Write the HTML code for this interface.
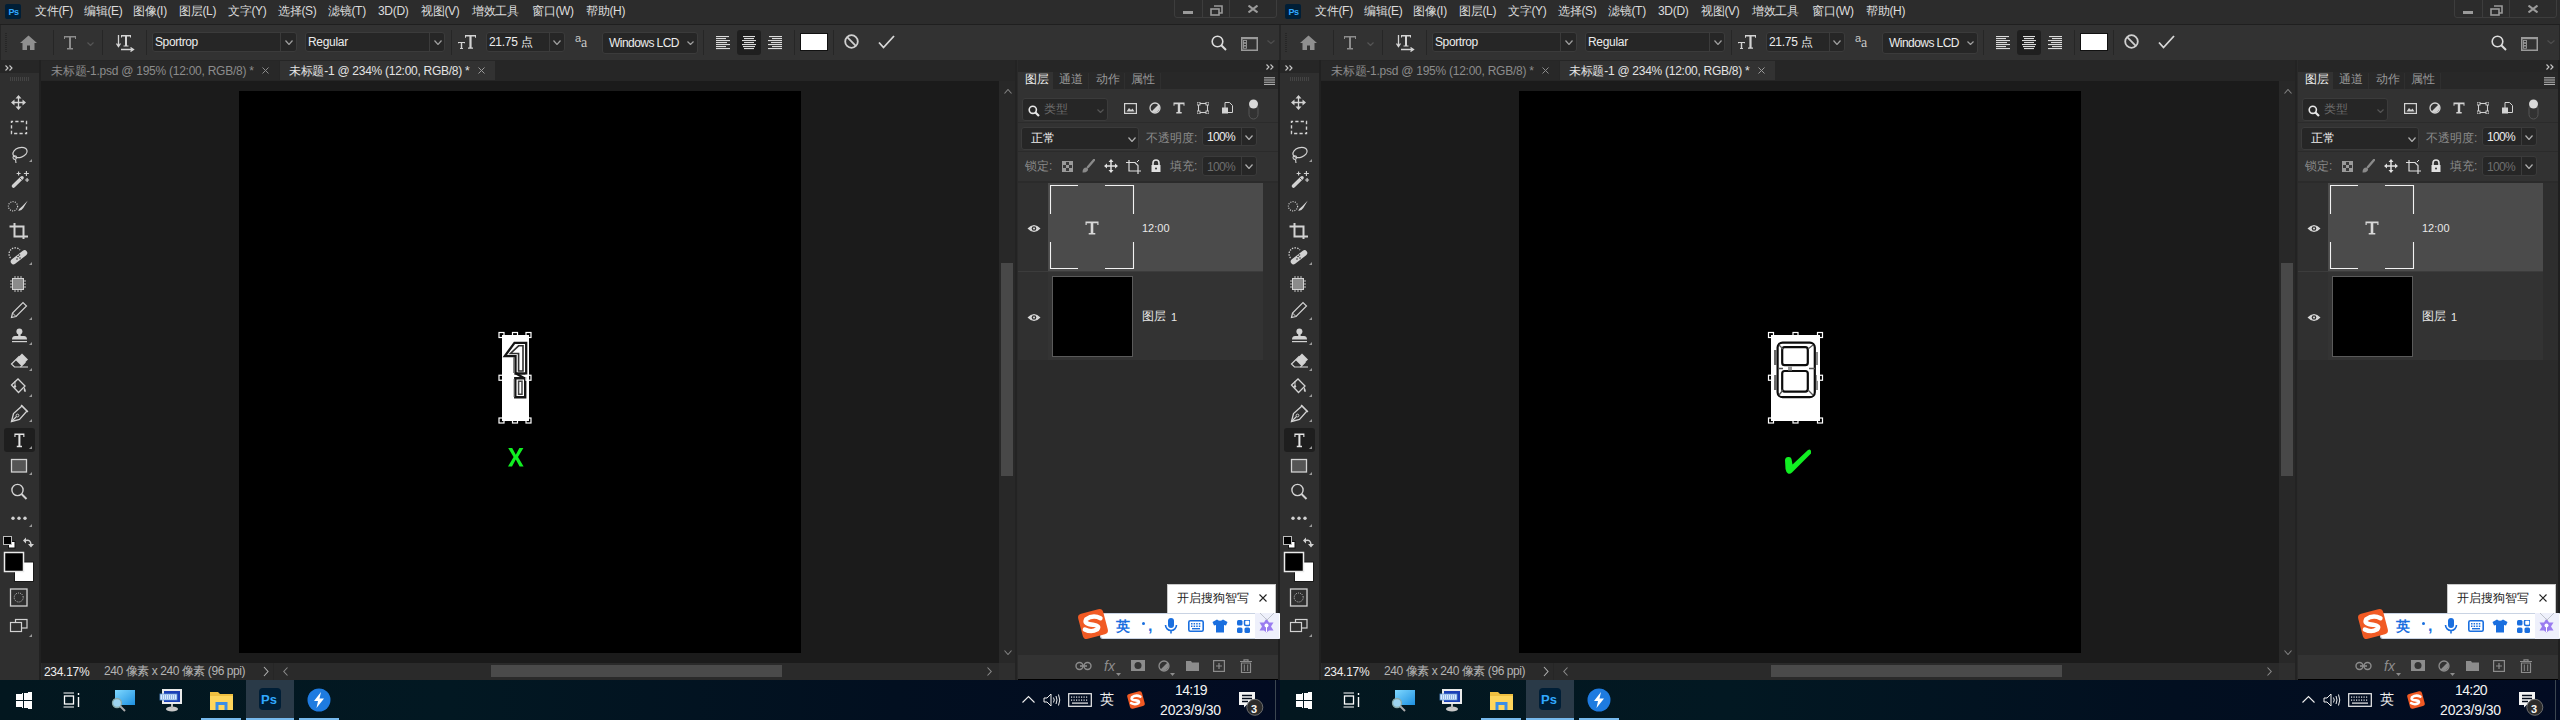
<!DOCTYPE html><html><head><meta charset="utf-8"><style>
*{margin:0;padding:0;box-sizing:border-box}
html,body{width:2560px;height:720px;overflow:hidden;background:#000}
body{font-family:"Liberation Sans",sans-serif;font-size:12px;color:#d0d0d0}
.h{position:absolute;top:0;width:1280px;height:720px;overflow:hidden}
.a{position:absolute;display:block}
.t{position:absolute;white-space:nowrap;line-height:12px}
</style></head><body><div class="h" style="left:0px"><div class="a" style="left:0px;top:0px;width:1280px;height:24px;background:#2c2c2c"></div><div class="a" style="left:0px;top:24px;width:1280px;height:1px;background:#1f1f1f"></div><div class="a" style="left:5px;top:4px;width:16px;height:15px;background:#001e36;border-radius:2px"></div><div class="t" style="left:8.5px;top:7px;font-size:9px;font-weight:bold;color:#31a8ff;line-height:10px;letter-spacing:-0.4px">Ps</div><div class="t" style="left:35px;top:5px;color:#dcdcdc;font-size:12px;line-height:13px;letter-spacing:-0.3px">文件(F)</div><div class="t" style="left:84px;top:5px;color:#dcdcdc;font-size:12px;line-height:13px;letter-spacing:-0.3px">编辑(E)</div><div class="t" style="left:133px;top:5px;color:#dcdcdc;font-size:12px;line-height:13px;letter-spacing:-0.3px">图像(I)</div><div class="t" style="left:179px;top:5px;color:#dcdcdc;font-size:12px;line-height:13px;letter-spacing:-0.3px">图层(L)</div><div class="t" style="left:228px;top:5px;color:#dcdcdc;font-size:12px;line-height:13px;letter-spacing:-0.3px">文字(Y)</div><div class="t" style="left:278px;top:5px;color:#dcdcdc;font-size:12px;line-height:13px;letter-spacing:-0.3px">选择(S)</div><div class="t" style="left:328px;top:5px;color:#dcdcdc;font-size:12px;line-height:13px;letter-spacing:-0.3px">滤镜(T)</div><div class="t" style="left:378px;top:5px;color:#dcdcdc;font-size:12px;line-height:13px;letter-spacing:-0.3px">3D(D)</div><div class="t" style="left:421px;top:5px;color:#dcdcdc;font-size:12px;line-height:13px;letter-spacing:-0.3px">视图(V)</div><div class="t" style="left:472px;top:5px;color:#dcdcdc;font-size:12px;line-height:13px;letter-spacing:-0.3px">增效工具</div><div class="t" style="left:532px;top:5px;color:#dcdcdc;font-size:12px;line-height:13px;letter-spacing:-0.3px">窗口(W)</div><div class="t" style="left:586px;top:5px;color:#dcdcdc;font-size:12px;line-height:13px;letter-spacing:-0.3px">帮助(H)</div><div class="a" style="left:1174px;top:-3px;width:103px;height:21px;border:1px solid #3d3d3d;border-radius:3px"></div><div class="a" style="left:1202px;top:0px;width:1px;height:18px;background:#3d3d3d"></div><div class="a" style="left:1229px;top:0px;width:1px;height:18px;background:#3d3d3d"></div><div class="a" style="left:1183px;top:11px;width:10px;height:3px;background:#9a9a9a"></div><svg class="a" style="left:1210px;top:5px;" width="13" height="11" viewBox="0 0 13 11"><path d="M4 1h8v7h-3" fill="none" stroke="#9a9a9a" stroke-width="1.6"/><rect x="1" y="4" width="8" height="6" fill="none" stroke="#9a9a9a" stroke-width="1.6"/></svg><svg class="a" style="left:1248px;top:5px;" width="10" height="8" viewBox="0 0 10 8"><path d="M0.5 0.5L9.5 7.5M9.5 0.5L0.5 7.5" stroke="#9a9a9a" stroke-width="2"/></svg><div class="a" style="left:0px;top:25px;width:1280px;height:35px;background:#323232"></div><div class="a" style="left:0px;top:25px;width:1px;height:35px;background:#262626"></div><div class="a" style="left:1279px;top:25px;width:1px;height:35px;background:#262626"></div><svg class="a" style="left:5px;top:33px;" width="2" height="20" viewBox="0 0 2 20"><path d="M1 0V20" stroke="#262626" stroke-width="2" stroke-dasharray="1 1"/></svg><div class="a" style="left:53px;top:30px;width:1px;height:25px;background:#262626"></div><div class="a" style="left:102px;top:30px;width:1px;height:25px;background:#262626"></div><div class="a" style="left:146px;top:30px;width:1px;height:25px;background:#262626"></div><div class="a" style="left:451px;top:30px;width:1px;height:25px;background:#262626"></div><div class="a" style="left:703px;top:30px;width:1px;height:25px;background:#262626"></div><div class="a" style="left:794px;top:30px;width:1px;height:25px;background:#262626"></div><div class="a" style="left:833px;top:30px;width:1px;height:25px;background:#262626"></div><svg class="a" style="left:20px;top:35px;" width="17" height="16" viewBox="0 0 17 16"><path d="M8.5 0.5L0 8H2.5V15H7V10.5H10V15H14.5V8H17Z" fill="#8f8f8f"/></svg><svg class="a" style="left:63px;top:35px;" width="14" height="15" viewBox="0 0 14 15"><path d="M1 1H13V4H12V2.5H8V13H10V14.5H4V13H6V2.5H2V4H1Z" fill="#8c8c8c"/></svg><svg class="a" style="left:87px;top:42px;" width="7" height="4" viewBox="0 0 7 4"><path d="M0.5 0.5 L3.5 3.5 L6.5 0.5" fill="none" stroke="#555555" stroke-width="1.2"/></svg><svg class="a" style="left:116px;top:34px;" width="19" height="18" viewBox="0 0 19 18"><path d="M2.5 1V12M0.5 9.5L2.5 12.5L4.5 9.5" fill="none" stroke="#d4d4d4" stroke-width="1.3"/><path d="M5 1H15V3.6H14V2.4H11V11.5H12.5V12.6H7.5V11.5H9V2.4H6V3.6H5Z" fill="#d4d4d4"/><path d="M5 15.5H17M14.5 13.5L17.5 15.5L14.5 17.5" fill="none" stroke="#d4d4d4" stroke-width="1.3"/></svg><div class="a" style="left:152px;top:32px;width:145px;height:20px;background:#262626;border:1px solid #3b3b3b;border-radius:3px"></div><div class="a" style="left:280px;top:33px;width:1px;height:18px;background:#3b3b3b"></div><div class="t" style="left:155px;top:36px;color:#ececec;font-size:12px;letter-spacing:-0.4px">Sportrop</div><svg class="a" style="left:285px;top:40px;" width="8" height="5" viewBox="0 0 8 5"><path d="M0.5 0.5 L4.0 4.5 L7.5 0.5" fill="none" stroke="#a0a0a0" stroke-width="1.2"/></svg><div class="a" style="left:305px;top:32px;width:140px;height:20px;background:#262626;border:1px solid #3b3b3b;border-radius:3px"></div><div class="a" style="left:429px;top:33px;width:1px;height:18px;background:#3b3b3b"></div><div class="t" style="left:308px;top:36px;color:#ececec;font-size:12px;letter-spacing:-0.3px">Regular</div><svg class="a" style="left:434px;top:40px;" width="8" height="5" viewBox="0 0 8 5"><path d="M0.5 0.5 L4.0 4.5 L7.5 0.5" fill="none" stroke="#a0a0a0" stroke-width="1.2"/></svg><svg class="a" style="left:457px;top:34px;" width="20" height="16" viewBox="0 0 20 16"><path d="M8 1H19V3.8H18V2.5H14.6V13.5H16V14.8H11V13.5H12.4V2.5H9V3.8H8Z" fill="#d4d4d4"/><path d="M1 8H8V9.5H7.5V9H5.2V14H6V15H3V14H3.8V9H1.5V9.5H1Z" fill="#d4d4d4"/></svg><div class="a" style="left:486px;top:32px;width:79px;height:20px;background:#262626;border:1px solid #3b3b3b;border-radius:3px"></div><div class="a" style="left:549px;top:33px;width:1px;height:18px;background:#3b3b3b"></div><div class="t" style="left:489px;top:36px;color:#ececec;font-size:12px;letter-spacing:-0.3px">21.75 点</div><svg class="a" style="left:553px;top:40px;" width="8" height="5" viewBox="0 0 8 5"><path d="M0.5 0.5 L4.0 4.5 L7.5 0.5" fill="none" stroke="#a0a0a0" stroke-width="1.2"/></svg><div class="t" style="left:575px;top:33px;color:#c8c8c8;font-size:11px;line-height:11px">a</div><div class="t" style="left:581px;top:37px;color:#c8c8c8;font-size:14px;line-height:12px;font-family:Liberation Serif,serif">a</div><div class="a" style="left:602px;top:32px;width:96px;height:22px;background:#262626;border:1px solid #3b3b3b;border-radius:3px"></div><div class="t" style="left:609px;top:37px;color:#ececec;font-size:12px;letter-spacing:-0.55px">Windows LCD</div><svg class="a" style="left:687px;top:41px;" width="7" height="4" viewBox="0 0 7 4"><path d="M0.5 0.5 L3.5 3.5 L6.5 0.5" fill="none" stroke="#a0a0a0" stroke-width="1.2"/></svg><div class="a" style="left:737px;top:30px;width:24px;height:25px;background:#1f1f1f;border-radius:3px"></div><svg class="a" style="left:716px;top:36px;" width="15" height="14" viewBox="0 0 15 14"><rect x="0" y="0" width="13" height="1.1" fill="#dcdcdc"/><rect x="0" y="2" width="10" height="1.1" fill="#dcdcdc"/><rect x="0" y="4" width="14" height="1.1" fill="#dcdcdc"/><rect x="0" y="6" width="11" height="1.1" fill="#dcdcdc"/><rect x="0" y="8" width="14" height="1.1" fill="#dcdcdc"/><rect x="0" y="10" width="10" height="1.1" fill="#dcdcdc"/><rect x="0" y="12" width="14" height="1.1" fill="#dcdcdc"/></svg><svg class="a" style="left:742px;top:36px;" width="15" height="14" viewBox="0 0 15 14"><rect x="1" y="0" width="12" height="1.1" fill="#dcdcdc"/><rect x="2" y="2" width="10" height="1.1" fill="#dcdcdc"/><rect x="0" y="4" width="14" height="1.1" fill="#dcdcdc"/><rect x="2" y="6" width="10" height="1.1" fill="#dcdcdc"/><rect x="0" y="8" width="14" height="1.1" fill="#dcdcdc"/><rect x="1" y="10" width="12" height="1.1" fill="#dcdcdc"/><rect x="2" y="12" width="10" height="1.1" fill="#dcdcdc"/></svg><svg class="a" style="left:768px;top:36px;" width="15" height="14" viewBox="0 0 15 14"><rect x="1" y="0" width="13" height="1.1" fill="#dcdcdc"/><rect x="4" y="2" width="10" height="1.1" fill="#dcdcdc"/><rect x="0" y="4" width="14" height="1.1" fill="#dcdcdc"/><rect x="3" y="6" width="11" height="1.1" fill="#dcdcdc"/><rect x="0" y="8" width="14" height="1.1" fill="#dcdcdc"/><rect x="4" y="10" width="10" height="1.1" fill="#dcdcdc"/><rect x="0" y="12" width="14" height="1.1" fill="#dcdcdc"/></svg><div class="a" style="left:800px;top:33px;width:28px;height:18px;background:#ffffff;border:1px solid #111"></div><svg class="a" style="left:844px;top:34px;" width="15" height="15" viewBox="0 0 15 15"><circle cx="7.5" cy="7.5" r="6.3" fill="none" stroke="#d0d0d0" stroke-width="1.8"/><path d="M3.2 3.2L11.8 11.8" stroke="#d0d0d0" stroke-width="1.8"/></svg><svg class="a" style="left:878px;top:35px;" width="17" height="14" viewBox="0 0 17 14"><path d="M1 7.5L5.5 12.5L16 1" fill="none" stroke="#d8d8d8" stroke-width="1.8"/></svg><svg class="a" style="left:1211px;top:35px;" width="17" height="17" viewBox="0 0 17 17"><circle cx="6.5" cy="6.5" r="5.3" fill="none" stroke="#dcdcdc" stroke-width="1.6"/><path d="M10.3 10.3L15 15" stroke="#dcdcdc" stroke-width="2"/></svg><svg class="a" style="left:1241px;top:37px;" width="17" height="14" viewBox="0 0 17 14"><rect x="0.75" y="0.75" width="15.5" height="12.5" fill="none" stroke="#9a9a9a" stroke-width="1.5"/><rect x="0" y="0" width="17" height="2.2" fill="#9a9a9a"/><rect x="2.5" y="3.5" width="3" height="2.2" fill="none" stroke="#9a9a9a" stroke-width="0.9"/><rect x="2.5" y="6.3" width="3" height="2.2" fill="none" stroke="#9a9a9a" stroke-width="0.9"/><rect x="2.5" y="9.1" width="3" height="2.2" fill="none" stroke="#9a9a9a" stroke-width="0.9"/></svg><svg class="a" style="left:1267px;top:40px;" width="8" height="4" viewBox="0 0 8 4"><path d="M0.5 0.5 L4.0 3.5 L7.5 0.5" fill="none" stroke="#4e4e4e" stroke-width="1.2"/></svg><div class="a" style="left:0px;top:60px;width:1280px;height:21px;background:#262626"></div><div class="a" style="left:0px;top:73px;width:39px;height:607px;background:#2f2f2f"></div><div class="a" style="left:39px;top:60px;width:2px;height:620px;background:#212121"></div><svg class="a" style="left:5px;top:65px;" width="9" height="6" viewBox="0 0 9 6"><path d="M0.5 0.5L3 3L0.5 5.5M4.5 0.5L7 3L4.5 5.5" fill="none" stroke="#c8c8c8" stroke-width="1.1"/></svg><svg class="a" style="left:10px;top:77px;" width="20" height="4" viewBox="0 0 20 4"><rect x="0" y="0" width="1" height="4" fill="#444"/><rect x="2" y="0" width="1" height="4" fill="#444"/><rect x="4" y="0" width="1" height="4" fill="#444"/><rect x="6" y="0" width="1" height="4" fill="#444"/><rect x="8" y="0" width="1" height="4" fill="#444"/><rect x="10" y="0" width="1" height="4" fill="#444"/><rect x="12" y="0" width="1" height="4" fill="#444"/><rect x="14" y="0" width="1" height="4" fill="#444"/><rect x="16" y="0" width="1" height="4" fill="#444"/><rect x="18" y="0" width="1" height="4" fill="#444"/></svg><div class="a" style="left:41px;top:61px;width:238px;height:19px;background:#282828"></div><div class="a" style="left:280px;top:61px;width:215px;height:19px;background:#323232"></div><div class="t" style="left:51px;top:65px;color:#8c8c8c;font-size:12px;line-height:13px;letter-spacing:-0.25px">未标题-1.psd @ 195% (12:00, RGB/8) *</div><svg class="a" style="left:262px;top:67px;" width="7" height="7" viewBox="0 0 7 7"><path d="M0.5 0.5L6.5 6.5M6.5 0.5L0.5 6.5" stroke="#8c8c8c" stroke-width="1"/></svg><div class="t" style="left:289px;top:65px;color:#e4e4e4;font-size:12px;line-height:13px;letter-spacing:-0.27px">未标题-1 @ 234% (12:00, RGB/8) *</div><svg class="a" style="left:478px;top:67px;" width="7" height="7" viewBox="0 0 7 7"><path d="M0.5 0.5L6.5 6.5M6.5 0.5L0.5 6.5" stroke="#9a9a9a" stroke-width="1"/></svg><div class="a" style="left:4px;top:428px;width:31px;height:24px;background:#1e1e1e;border-radius:3px"></div><svg class="a" style="left:0px;top:0px;" width="40" height="680" viewBox="0 0 40 680"><path d="M18.5 97V108M13 102.5H24" stroke="#d2d2d2" stroke-width="1.3"/><path d="M18.5 95L15.5 98.5H21.5ZM18.5 110L15.5 106.5H21.5ZM11 102.5L14.5 99.5V105.5ZM26 102.5L22.5 99.5V105.5Z" fill="#d2d2d2"/><rect x="11.5" y="121.5" width="15" height="12" fill="none" stroke="#d2d2d2" stroke-width="1.4" stroke-dasharray="3.2 2.2" stroke-dashoffset="1.6"/><ellipse cx="20" cy="152.5" rx="7.3" ry="4.8" transform="rotate(-18 20 152.5)" fill="none" stroke="#d2d2d2" stroke-width="1.2"/><circle cx="14.8" cy="157.6" r="1.8" fill="none" stroke="#d2d2d2" stroke-width="1.1"/><path d="M15.5 159.5L16 163" stroke="#d2d2d2" stroke-width="1.1"/><path d="M13.5 186L22 177.8" stroke="#d2d2d2" stroke-width="3.6" stroke-linecap="round"/><path d="M20.2 178.2L21.6 179.6" stroke="#2f2f2f" stroke-width="1"/><path d="M18.6 171.5V175.5M16.6 173.5H20.6M26.4 171V176M23.9 173.5H28.9M27.1 178V182M25.1 180H29.1" stroke="#d2d2d2" stroke-width="1.1"/><circle cx="13" cy="206.3" r="4.6" fill="none" stroke="#d2d2d2" stroke-width="1.2" stroke-dasharray="1 1.3"/><path d="M27.8 200.5L22 206.5Q19 208.5 18.3 211Q21.5 211 23.3 208Z" fill="#d2d2d2"/><path d="M14.5 223V236.5H28M9.5 226.5H23.5V239" fill="none" stroke="#d2d2d2" stroke-width="2"/><path d="M13.5 261.5L24.5 253" stroke="#d2d2d2" stroke-width="5.5" stroke-linecap="round"/><circle cx="18" cy="256.5" r="0.8" fill="#2f2f2f"/><circle cx="20" cy="258" r="0.8" fill="#2f2f2f"/><circle cx="17" cy="259" r="0.8" fill="#2f2f2f"/><circle cx="19.5" cy="255" r="0.8" fill="#2f2f2f"/><path d="M10.5 258A5.5 5.5 0 0 1 20 250" fill="none" stroke="#d2d2d2" stroke-width="1.2" stroke-dasharray="1.4 1.2"/><rect x="12.5" y="278.5" width="11" height="11" fill="#8a8a8a" stroke="#d2d2d2" stroke-width="1"/><path d="M15 276V278M18 276V278M21 276V278M15 290V292M18 290V292M21 290V292M10 281H12M10 284H12M10 287H12M24 281H26M24 284H26M24 287H26" stroke="#d2d2d2" stroke-width="0.9"/><path d="M11.5 317.5L12.5 313L23 302.5L26.5 306L16 316.5Z" fill="none" stroke="#d2d2d2" stroke-width="1.2"/><path d="M12.5 313L16 316.5" stroke="#d2d2d2" stroke-width="1"/><circle cx="19.4" cy="331.5" r="3" fill="#d2d2d2"/><rect x="18.2" y="333" width="2.4" height="3" fill="#d2d2d2"/><path d="M12 339.5Q12 336 15 336H24Q27 336 27 339.5Z" fill="#d2d2d2"/><rect x="12" y="341" width="15" height="1.2" fill="#d2d2d2"/><path d="M11.5 364L19 356.5L25 362.5L20.5 367H14.5Z" fill="none" stroke="#d2d2d2" stroke-width="1.2"/><path d="M15.5 360L22 353.5L28 359.5L21.5 366Z" fill="#d2d2d2"/><path d="M20.5 367H28" stroke="#d2d2d2" stroke-width="1.1"/><path d="M11.5 385L18 379L25 386L18.5 392.5Z" fill="none" stroke="#d2d2d2" stroke-width="1.3"/><path d="M15 381V386" stroke="#d2d2d2" stroke-width="1"/><circle cx="15" cy="386.5" r="1.2" fill="#d2d2d2"/><path d="M24 387Q26.5 390 25.5 392Q23 392 24 387Z" fill="#d2d2d2"/><path d="M11.5 421.5L13.5 413.5L22 406L27 411L19.5 419.5Z" fill="none" stroke="#d2d2d2" stroke-width="1.3"/><circle cx="17.5" cy="415.5" r="1.4" fill="none" stroke="#d2d2d2" stroke-width="1"/><path d="M11.5 421.5L16.5 416.5M21 405L28 412" stroke="#d2d2d2" stroke-width="1.2"/><path d="M14.4 433.5H24.4V437H23.3V435H20.4V445.8H22V447.3H16.8V445.8H18.4V435H15.5V437H14.4Z" fill="#e4e4e4"/><rect x="11.5" y="459.5" width="15" height="12.5" fill="#555" stroke="#d2d2d2" stroke-width="1.3"/><circle cx="17.5" cy="490" r="5.6" fill="none" stroke="#d2d2d2" stroke-width="1.4"/><path d="M21.5 494L26.5 499" stroke="#d2d2d2" stroke-width="2"/><circle cx="13" cy="518.2" r="1.7" fill="#d2d2d2"/><circle cx="19" cy="518.2" r="1.7" fill="#d2d2d2"/><circle cx="25" cy="518.2" r="1.7" fill="#d2d2d2"/><path d="M32 159V162H29Z" fill="#9a9a9a"/><path d="M32 262V265H29Z" fill="#9a9a9a"/><path d="M32 317V320H29Z" fill="#9a9a9a"/><path d="M32 342V345H29Z" fill="#9a9a9a"/><path d="M32 368V371H29Z" fill="#9a9a9a"/><path d="M32 394V397H29Z" fill="#9a9a9a"/><path d="M32 419V422H29Z" fill="#9a9a9a"/><path d="M32 446V449H29Z" fill="#9a9a9a"/><path d="M32 472V475H29Z" fill="#9a9a9a"/><path d="M32 524V527H29Z" fill="#9a9a9a"/><path d="M32 634V637H29Z" fill="#9a9a9a"/><rect x="8.5" y="541.5" width="6.5" height="6.5" fill="#fff" stroke="#111" stroke-width="1"/><rect x="3.5" y="536.5" width="8" height="8" fill="#000" stroke="#bbb" stroke-width="1"/><path d="M25.5 540.5Q30.5 539 31 544.5" fill="none" stroke="#d2d2d2" stroke-width="1.5"/><path d="M23 540.5L26 537.5V543.5ZM31 547.5L28 544H34Z" fill="#d2d2d2"/><rect x="14.5" y="562" width="19" height="19.5" fill="#fff" stroke="#1a1a1a" stroke-width="1"/><rect x="4.5" y="552.5" width="19" height="19" fill="#000" stroke="#eaeaea" stroke-width="1.5"/><rect x="10.5" y="589" width="16.5" height="17" fill="none" stroke="#d2d2d2" stroke-width="1.3"/><circle cx="18.7" cy="597.5" r="4.5" fill="none" stroke="#d2d2d2" stroke-width="1" stroke-dasharray="0.9 1.1"/><rect x="15.5" y="619.5" width="11.5" height="8.5" fill="none" stroke="#d2d2d2" stroke-width="1.2"/><rect x="10.5" y="622.5" width="11" height="9" fill="#2f2f2f" stroke="#d2d2d2" stroke-width="1.2"/></svg><div class="a" style="left:41px;top:81px;width:958px;height:582px;background:#1b1b1b"></div><div class="a" style="left:239px;top:91px;width:562px;height:562px;background:#000"></div><div class="a" style="left:502px;top:335px;width:27px;height:86px;background:#fff"></div><svg class="a" style="left:0px;top:0px;" width="1280" height="720" viewBox="0 0 1280 720"><g fill="none" stroke-linejoin="miter"><path d="M514.5 342.8H526.2V373.5H515.5V356.2H504.8Z" stroke="#151515" stroke-width="2.3"/><path d="M518.6 345.8H523V371H518.6V353.5H510.5Z" stroke="#303030" stroke-width="1.6"/><path d="M516 373.5L524 378" stroke="#111" stroke-width="2.2"/><path d="M515.3 378.3H525.2V397.2H515.3Z" stroke="#151515" stroke-width="2.4"/><path d="M518.6 381.2H522V394.3H518.6Z" stroke="#444" stroke-width="1.5"/><path d="M513.5 357V373" stroke="#888" stroke-width="1"/><path d="M514 379V397" stroke="#888" stroke-width="1"/></g><rect x="499.0" y="332.5" width="5" height="5" fill="none" stroke="#fff" stroke-width="1.2"/><rect x="512.5" y="332.5" width="5" height="5" fill="none" stroke="#fff" stroke-width="1.2"/><rect x="526.0" y="332.5" width="5" height="5" fill="none" stroke="#fff" stroke-width="1.2"/><rect x="499.0" y="375.25" width="5" height="5" fill="none" stroke="#fff" stroke-width="1.2"/><rect x="526.0" y="375.25" width="5" height="5" fill="none" stroke="#fff" stroke-width="1.2"/><rect x="499.0" y="418.0" width="5" height="5" fill="none" stroke="#fff" stroke-width="1.2"/><rect x="512.5" y="418.0" width="5" height="5" fill="none" stroke="#fff" stroke-width="1.2"/><rect x="526.0" y="418.0" width="5" height="5" fill="none" stroke="#fff" stroke-width="1.2"/></svg><svg class="a" style="left:0px;top:0px;" width="1280" height="720" viewBox="0 0 1280 720"><path d="M508.2 448H512.2L515.8 454.8L519.4 448H523.4L518 457L523.6 466.5H519.6L515.8 459.6L512 466.5H508L513.6 457Z" fill="#11ee22"/></svg><div class="a" style="left:999px;top:81px;width:16px;height:582px;background:#282828"></div><div class="a" style="left:1001px;top:263px;width:12px;height:213px;background:#484848"></div><svg class="a" style="left:1004px;top:89px;" width="8" height="5" viewBox="0 0 8 5"><path d="M0.5 4.5 L4.0 0.5 L7.5 4.5" fill="none" stroke="#808080" stroke-width="1.1"/></svg><svg class="a" style="left:1004px;top:650px;" width="8" height="5" viewBox="0 0 8 5"><path d="M0.5 0.5 L4.0 4.5 L7.5 0.5" fill="none" stroke="#808080" stroke-width="1.1"/></svg><div class="a" style="left:41px;top:663px;width:958px;height:17px;background:#2a2a2a"></div><div class="a" style="left:42px;top:663px;width:48px;height:17px;background:#262626"></div><div class="t" style="left:44px;top:666px;color:#eeeeee;font-size:12px;letter-spacing:-0.3px">234.17%</div><div class="t" style="left:104px;top:665px;color:#b4b4b4;font-size:12px;line-height:13px;letter-spacing:-0.43px">240 像素 x 240 像素 (96 ppi)</div><svg class="a" style="left:263px;top:666px;" width="6" height="11" viewBox="0 0 6 11"><path d="M1 1L5 5.5L1 10" fill="none" stroke="#b0b0b0" stroke-width="1.1"/></svg><div class="a" style="left:273px;top:663px;width:1px;height:17px;background:#262626"></div><svg class="a" style="left:283px;top:667px;" width="5" height="9" viewBox="0 0 5 9"><path d="M4.5 0.5L0.8 4.5L4.5 8.5" fill="none" stroke="#8a8a8a" stroke-width="1.1"/></svg><div class="a" style="left:491px;top:665px;width:291px;height:12px;background:#4a4a4a"></div><svg class="a" style="left:987px;top:667px;" width="5" height="9" viewBox="0 0 5 9"><path d="M0.5 0.5L4.2 4.5L0.5 8.5" fill="none" stroke="#8a8a8a" stroke-width="1.1"/></svg><div class="a" style="left:999px;top:663px;width:16px;height:17px;background:#2e2e2e"></div><div class="a" style="left:1015px;top:60px;width:2px;height:620px;background:#232323"></div><div class="a" style="left:1017px;top:60px;width:1px;height:620px;background:#2a2a2a"></div><div class="a" style="left:1018px;top:60px;width:262px;height:12px;background:#262626"></div><svg class="a" style="left:1266px;top:64px;" width="9" height="6" viewBox="0 0 9 6"><path d="M0.5 0.5L3 3L0.5 5.5M4.5 0.5L7 3L4.5 5.5" fill="none" stroke="#c8c8c8" stroke-width="1.1"/></svg><div class="a" style="left:1018px;top:72px;width:260px;height:17px;background:#282828"></div><div class="a" style="left:1018px;top:72px;width:35px;height:17px;background:#323232"></div><div class="a" style="left:1088px;top:73px;width:1px;height:16px;background:#2f2f2f"></div><div class="a" style="left:1124px;top:73px;width:1px;height:16px;background:#2f2f2f"></div><div class="a" style="left:1160px;top:73px;width:1px;height:16px;background:#2f2f2f"></div><div class="t" style="left:1025px;top:73px;color:#eeeeee;font-size:12px;line-height:13px">图层</div><div class="t" style="left:1059px;top:73px;color:#999999;font-size:12px;line-height:13px">通道</div><div class="t" style="left:1096px;top:73px;color:#999999;font-size:12px;line-height:13px">动作</div><div class="t" style="left:1131px;top:73px;color:#999999;font-size:12px;line-height:13px">属性</div><svg class="a" style="left:1264px;top:77px;" width="11" height="8" viewBox="0 0 11 8"><rect x="0" y="0.3" width="11" height="1" fill="#bdbdbd"/><rect x="0" y="2.5" width="11" height="1" fill="#bdbdbd"/><rect x="0" y="4.7" width="11" height="1" fill="#bdbdbd"/><rect x="0" y="6.9" width="11" height="1" fill="#bdbdbd"/></svg><div class="a" style="left:1018px;top:89px;width:260px;height:94px;background:#323232"></div><div class="a" style="left:1022px;top:98px;width:86px;height:23px;background:#262626;border:1px solid #3b3b3b;border-radius:3px"></div><svg class="a" style="left:1028px;top:105px;" width="12" height="12" viewBox="0 0 12 12"><circle cx="4.8" cy="4.8" r="3.6" fill="none" stroke="#e8e8e8" stroke-width="1.6"/><path d="M7.5 7.5L11 11" stroke="#e8e8e8" stroke-width="2.2"/></svg><div class="t" style="left:1044px;top:103px;color:#6c6c6c;font-size:12px;line-height:13px">类型</div><svg class="a" style="left:1097px;top:109px;" width="7" height="4" viewBox="0 0 7 4"><path d="M0.5 0.5 L3.5 3.5 L6.5 0.5" fill="none" stroke="#555" stroke-width="1.2"/></svg><svg class="a" style="left:1124px;top:103px;" width="13" height="11" viewBox="0 0 13 11"><rect x="0.6" y="0.6" width="11.8" height="9.8" fill="none" stroke="#d2d2d2" stroke-width="1.2"/><path d="M2.5 8.5L5 5L7 7L8.5 5.5L10.5 8.5Z" fill="#d2d2d2"/></svg><svg class="a" style="left:1149px;top:102px;" width="12" height="12" viewBox="0 0 12 12"><circle cx="6" cy="6" r="5" fill="none" stroke="#d2d2d2" stroke-width="1.3"/><path d="M9.5 2.5A5 5 0 0 1 2.5 9.5Z" fill="#d2d2d2"/></svg><svg class="a" style="left:1173px;top:102px;" width="12" height="12" viewBox="0 0 12 12"><path d="M0.5 0.5H11.5V3.8H10.5V2.3H7.2V10H8.7V11.5H3.3V10H4.8V2.3H1.5V3.8H0.5Z" fill="#d2d2d2"/></svg><svg class="a" style="left:1197px;top:102px;" width="12" height="12" viewBox="0 0 12 12"><rect x="1.5" y="1.5" width="9" height="9" fill="none" stroke="#d2d2d2" stroke-width="1.1"/><g fill="#323232" stroke="#d2d2d2" stroke-width="0.9"><rect x="0" y="0" width="3" height="3"/><rect x="9" y="0" width="3" height="3"/><rect x="0" y="9" width="3" height="3"/><rect x="9" y="9" width="3" height="3"/></g></svg><svg class="a" style="left:1221px;top:102px;" width="12" height="12" viewBox="0 0 12 12"><path d="M4 0.5H8.5L11.5 3.5V10.5H4Z" fill="none" stroke="#d2d2d2" stroke-width="1"/><rect x="1" y="5.5" width="6" height="6" fill="#d2d2d2"/></svg><svg class="a" style="left:1248px;top:99px;" width="11" height="21" viewBox="0 0 11 21"><rect x="1" y="5" width="9" height="15" rx="4.5" fill="none" stroke="#555" stroke-width="1"/><circle cx="5.5" cy="5" r="4.5" fill="#d8d8d8"/></svg><div class="a" style="left:1018px;top:122px;width:260px;height:1px;background:#2b2b2b"></div><div class="a" style="left:1021px;top:127px;width:118px;height:23px;background:#262626;border:1px solid #3b3b3b;border-radius:3px"></div><div class="t" style="left:1031px;top:132px;color:#eeeeee;font-size:12px;line-height:13px">正常</div><svg class="a" style="left:1128px;top:137px;" width="8" height="5" viewBox="0 0 8 5"><path d="M0.5 0.5 L4.0 4.5 L7.5 0.5" fill="none" stroke="#b0b0b0" stroke-width="1.2"/></svg><div class="t" style="left:1146px;top:132px;color:#8a8a8a;font-size:12px;line-height:13px">不透明度:</div><div class="a" style="left:1202px;top:127px;width:55px;height:19px;background:#262626;border:1px solid #3b3b3b;border-radius:3px"></div><div class="a" style="left:1241px;top:128px;width:1px;height:17px;background:#3b3b3b"></div><div class="t" style="left:1207px;top:131px;color:#ececec;font-size:12px;letter-spacing:-0.7px">100%</div><svg class="a" style="left:1245px;top:135px;" width="8" height="5" viewBox="0 0 8 5"><path d="M0.5 0.5 L4.0 4.5 L7.5 0.5" fill="none" stroke="#b0b0b0" stroke-width="1.2"/></svg><div class="a" style="left:1018px;top:151px;width:260px;height:1px;background:#2b2b2b"></div><div class="t" style="left:1025px;top:160px;color:#8a8a8a;font-size:12px;line-height:13px">锁定:</div><svg class="a" style="left:1062px;top:161px;" width="11" height="11" viewBox="0 0 11 11"><rect x="0.5" y="0.5" width="10" height="10" fill="#3a3a3a" stroke="#9a9a9a" stroke-width="1"/><rect x="1" y="1" width="3" height="3" fill="#9a9a9a"/><rect x="7" y="1" width="3" height="3" fill="#9a9a9a"/><rect x="4" y="4" width="3" height="3" fill="#9a9a9a"/><rect x="1" y="7" width="3" height="3" fill="#9a9a9a"/><rect x="7" y="7" width="3" height="3" fill="#9a9a9a"/></svg><svg class="a" style="left:1082px;top:159px;" width="13" height="14" viewBox="0 0 13 14"><path d="M12 1L6 8" stroke="#8a8a8a" stroke-width="2.4" stroke-linecap="round"/><path d="M0.5 13.5Q0.5 8.5 4.5 8.5Q7 9.5 5.5 12Q3.5 14 0.5 13.5Z" fill="#8a8a8a"/></svg><svg class="a" style="left:1104px;top:159px;" width="14" height="14" viewBox="0 0 14 14"><path d="M7 1V13M1 7H13" stroke="#e0e0e0" stroke-width="1.5"/><path d="M7 0L4.5 3H9.5ZM7 14L4.5 11H9.5ZM0 7L3 4.5V9.5ZM14 7L11 4.5V9.5Z" fill="#e0e0e0"/></svg><svg class="a" style="left:1126px;top:159px;" width="15" height="15" viewBox="0 0 15 15"><path d="M3 1V4M0 3.5H3M3 4V12H12M12 15V12M12 12H15M3.5 3.5H9L12 6.5V12" fill="none" stroke="#dedede" stroke-width="1.2"/><path d="M13 1L11 3" stroke="#dedede" stroke-width="1"/></svg><svg class="a" style="left:1150px;top:159px;" width="12" height="13" viewBox="0 0 12 13"><path d="M3 6V4A3 3 0 0 1 9 4V6" fill="none" stroke="#e0e0e0" stroke-width="1.6"/><rect x="1.5" y="6" width="9" height="7" fill="#e0e0e0"/><circle cx="6" cy="9.5" r="1" fill="#333"/></svg><div class="t" style="left:1170px;top:160px;color:#8a8a8a;font-size:12px;line-height:13px">填充:</div><div class="a" style="left:1202px;top:156px;width:55px;height:20px;background:#262626;border:1px solid #3b3b3b;border-radius:3px"></div><div class="a" style="left:1241px;top:157px;width:1px;height:18px;background:#3b3b3b"></div><div class="t" style="left:1207px;top:161px;color:#6e6e6e;font-size:12px;letter-spacing:-0.7px">100%</div><svg class="a" style="left:1245px;top:164px;" width="8" height="5" viewBox="0 0 8 5"><path d="M0.5 0.5 L4.0 4.5 L7.5 0.5" fill="none" stroke="#b0b0b0" stroke-width="1.2"/></svg><div class="a" style="left:1018px;top:181px;width:260px;height:2px;background:#2b2b2b"></div><div class="a" style="left:1018px;top:183px;width:260px;height:177px;background:#333333"></div><div class="a" style="left:1018px;top:183px;width:30px;height:177px;background:#303030"></div><div class="a" style="left:1263px;top:183px;width:15px;height:177px;background:#2e2e2e"></div><div class="a" style="left:1048px;top:183px;width:215px;height:88px;background:#4b4b4b"></div><div class="a" style="left:1018px;top:271px;width:245px;height:1px;background:#3c3c3c"></div><svg class="a" style="left:1027px;top:224px;" width="14" height="9" viewBox="0 0 14 9"><path d="M0.5 4.5Q7 -2.5 13.5 4.5Q7 11.5 0.5 4.5Z" fill="#d8d8d8"/><circle cx="7" cy="4.5" r="2.3" fill="#333"/><circle cx="7" cy="4.5" r="1" fill="#d8d8d8"/></svg><svg class="a" style="left:1027px;top:313px;" width="14" height="9" viewBox="0 0 14 9"><path d="M0.5 4.5Q7 -2.5 13.5 4.5Q7 11.5 0.5 4.5Z" fill="#d8d8d8"/><circle cx="7" cy="4.5" r="2.3" fill="#333"/><circle cx="7" cy="4.5" r="1" fill="#d8d8d8"/></svg><svg class="a" style="left:1049px;top:184px;" width="86" height="86" viewBox="0 0 86 86"><path d="M1.5 30V1.5H29M56 1.5H84.5V30M84.5 58V84.5H56M29 84.5H1.5V58" fill="none" stroke="#f2f2f2" stroke-width="1.1"/></svg><svg class="a" style="left:1085px;top:221px;" width="14" height="14" viewBox="0 0 14 14"><path d="M0.5 0.5H13.5V4H12.3V2.2H8.3V12H10.3V13.5H3.7V12H5.7V2.2H1.7V4H0.5Z" fill="#d8d8d8"/></svg><div class="t" style="left:1142px;top:222px;color:#e8e8e8;font-size:11px;line-height:12px">12:00</div><div class="a" style="left:1052px;top:276px;width:81px;height:81px;background:#000;border:1px solid #5a5a5a"></div><div class="t" style="left:1142px;top:310px;color:#e8e8e8;font-size:12px;line-height:13px">图层</div><div class="t" style="left:1171px;top:311px;color:#e8e8e8;font-size:11px;line-height:12px">1</div><div class="a" style="left:1018px;top:360px;width:260px;height:295px;background:#2b2b2b"></div><div class="a" style="left:1018px;top:655px;width:260px;height:24px;background:#333333"></div><svg class="a" style="left:1075px;top:661px;" width="17" height="10" viewBox="0 0 17 10"><rect x="1" y="1.5" width="7" height="7" rx="3.5" fill="none" stroke="#8c8c8c" stroke-width="1.4"/><rect x="9" y="1.5" width="7" height="7" rx="3.5" fill="none" stroke="#8c8c8c" stroke-width="1.4"/><path d="M5 5H12" stroke="#8c8c8c" stroke-width="1.6"/></svg><div class="t" style="left:1104px;top:660px;color:#8c8c8c;font-size:14px;line-height:13px"><i>fx</i></div><svg class="a" style="left:1131px;top:660px;" width="14" height="11" viewBox="0 0 14 11"><rect x="0" y="0" width="14" height="11" fill="#8c8c8c"/><circle cx="7" cy="5.5" r="3.5" fill="#333"/></svg><svg class="a" style="left:1158px;top:660px;" width="13" height="13" viewBox="0 0 13 13"><circle cx="6" cy="6" r="5" fill="none" stroke="#8c8c8c" stroke-width="1.3"/><path d="M9.5 2.5A5 5 0 0 1 2.5 9.5Z" fill="#8c8c8c"/></svg><svg class="a" style="left:1186px;top:660px;" width="13" height="11" viewBox="0 0 13 11"><path d="M0 1H5L6 2.5H13V11H0Z" fill="#8c8c8c"/></svg><svg class="a" style="left:1213px;top:660px;" width="12" height="12" viewBox="0 0 12 12"><rect x="0.6" y="0.6" width="10.8" height="10.8" fill="none" stroke="#8c8c8c" stroke-width="1.2"/><path d="M6 3V9M3 6H9" stroke="#8c8c8c" stroke-width="1.2"/></svg><svg class="a" style="left:1240px;top:659px;" width="12" height="14" viewBox="0 0 12 14"><path d="M0 2.5H12M4 2.5V0.8H8V2.5" fill="none" stroke="#8c8c8c" stroke-width="1.2"/><path d="M1.5 4H10.5V13.5H1.5Z" fill="none" stroke="#8c8c8c" stroke-width="1.2"/><path d="M4.3 5.5V12M7.7 5.5V12" stroke="#8c8c8c" stroke-width="1"/></svg><svg class="a" style="left:1116px;top:673px;" width="5" height="3" viewBox="0 0 5 3"><path d="M0 0H5L2.5 3Z" fill="#8c8c8c"/></svg><svg class="a" style="left:1170px;top:673px;" width="5" height="3" viewBox="0 0 5 3"><path d="M0 0H5L2.5 3Z" fill="#8c8c8c"/></svg><div class="a" style="left:1278px;top:60px;width:2px;height:620px;background:#1f1f1f"></div><div class="a" style="left:1167px;top:584px;width:109px;height:30px;background:#fff;border:1px solid #c8c8c8"></div><div class="t" style="left:1177px;top:592px;color:#222;font-size:12px;line-height:13px">开启搜狗智写</div><svg class="a" style="left:1259px;top:594px;" width="8" height="8" viewBox="0 0 8 8"><path d="M0.5 0.5L7.5 7.5M7.5 0.5L0.5 7.5" stroke="#222" stroke-width="1.1"/></svg><div class="a" style="left:1100px;top:613px;width:180px;height:26px;background:#fff;border:1px solid #c9d3e3;border-right:none;border-radius:3px 0 0 3px"></div><svg class="a" style="left:1076px;top:607px;" width="34" height="34" viewBox="0 0 34 34"><g transform="rotate(-15 17.0 17.0)"><rect x="4.08" y="4.08" width="25.84" height="25.84" rx="4.08" fill="#f15a24"/></g><path d="M24.48 11.22Q17.0 7.48 10.2 12.24Q7.48 17.0 17.0 17.68Q24.48 18.700000000000003 21.08 22.44Q15.3 25.84 8.84 22.44" fill="none" stroke="#fff" stroke-width="4.42" stroke-linecap="round"/></svg><div class="t" style="left:1116px;top:619px;color:#1a6fdf;font-size:14px;line-height:15px;font-weight:bold">英</div><div class="a" style="left:1142px;top:622px;width:3px;height:3px;background:#1a6fdf;border-radius:50%"></div><div class="t" style="left:1148px;top:617px;color:#1a6fdf;font-size:16px;line-height:17px;font-weight:bold">,</div><svg class="a" style="left:1164px;top:618px;" width="14" height="16" viewBox="0 0 14 16"><rect x="4" y="0" width="6" height="10" rx="3" fill="#1a6fdf"/><path d="M1.5 7A5.5 5.5 0 0 0 12.5 7M7 12.5V15.5" fill="none" stroke="#1a6fdf" stroke-width="1.6"/></svg><svg class="a" style="left:1188px;top:620px;" width="16" height="12" viewBox="0 0 16 12"><rect x="0.8" y="0.8" width="14.4" height="10.4" rx="1.5" fill="none" stroke="#1a6fdf" stroke-width="1.6"/><rect x="3.0" y="3" width="1.5" height="1.5" fill="#1a6fdf"/><rect x="3.0" y="5.5" width="1.5" height="1.5" fill="#1a6fdf"/><rect x="5.6" y="3" width="1.5" height="1.5" fill="#1a6fdf"/><rect x="5.6" y="5.5" width="1.5" height="1.5" fill="#1a6fdf"/><rect x="8.2" y="3" width="1.5" height="1.5" fill="#1a6fdf"/><rect x="8.2" y="5.5" width="1.5" height="1.5" fill="#1a6fdf"/><rect x="10.8" y="3" width="1.5" height="1.5" fill="#1a6fdf"/><rect x="10.8" y="5.5" width="1.5" height="1.5" fill="#1a6fdf"/><rect x="4" y="8" width="8" height="1.4" fill="#1a6fdf"/></svg><svg class="a" style="left:1212px;top:619px;" width="16" height="14" viewBox="0 0 16 14"><path d="M5 0.5L0.5 3L2 6.5L4 6V13.5H12V6L14 6.5L15.5 3L11 0.5Q8 3 5 0.5Z" fill="#1a6fdf"/></svg><svg class="a" style="left:1237px;top:620px;" width="13" height="13" viewBox="0 0 13 13"><rect x="0" y="0" width="5.5" height="5.5" rx="1.5" fill="#1a6fdf"/><rect x="7.5" y="0" width="5.5" height="5.5" rx="1.5" fill="none" stroke="#1a6fdf" stroke-width="1.5"/><rect x="0" y="7.5" width="5.5" height="5.5" rx="1.5" fill="#1a6fdf"/><rect x="7.5" y="7.5" width="5.5" height="5.5" rx="1.5" fill="#1a6fdf"/></svg><div class="a" style="left:1255px;top:613px;width:24px;height:26px;background:#eef0fb"></div><svg class="a" style="left:1259px;top:618px;" width="15" height="15" viewBox="0 0 15 15"><path d="M7.5 0.5L10 4.5H14.5L12 8.5L14.5 12.5H10L7.5 14.5L5 12.5H0.5L3 8.5L0.5 4.5H5Z" fill="#9a7cf0"/><circle cx="7.5" cy="7.5" r="2" fill="#fff"/><path d="M7.5 9V14" stroke="#fff" stroke-width="1"/></svg><svg class="a" style="left:1260px;top:612px;" width="14" height="9" viewBox="0 0 14 9"><path d="M0 1L7 8L14 1" fill="none" stroke="#bfc3cc" stroke-width="1"/></svg><div class="a" style="left:0px;top:680px;width:1280px;height:40px;background:linear-gradient(90deg,#03171f 0%,#021822 35%,#020f20 70%,#020b22 100%)"></div><svg class="a" style="left:16px;top:692px;" width="17" height="17" viewBox="0 0 17 17"><path d="M0 2.3L7 1.3V8H0ZM8 1.1L16 0V8H8ZM0 9H7V15.7L0 14.7ZM8 9H16V17L8 15.9Z" fill="#fff" shape-rendering="crispEdges"/></svg><svg class="a" style="left:63px;top:692px;" width="18" height="16" viewBox="0 0 18 16"><path d="M0.5 1H11M0.5 15H11" stroke="#fff" stroke-width="1.2"/><rect x="1.5" y="4" width="9" height="8" fill="none" stroke="#fff" stroke-width="1.3"/><path d="M15.5 1V3M15.5 5V15" stroke="#fff" stroke-width="1.4"/></svg><svg class="a" style="left:111px;top:689px;" width="25" height="24" viewBox="0 0 25 24"><rect x="4" y="1" width="20" height="15" fill="#4cc2ff"/><rect x="4" y="1" width="20" height="15" fill="url(#g1)"/><circle cx="6" cy="14" r="4.5" fill="#9cd3f0" stroke="#8aa" stroke-width="1.3"/><path d="M9 17L14 22" stroke="#aaa" stroke-width="2"/><defs><linearGradient id="g1" x1="0" y1="0" x2="1" y2="1"><stop offset="0" stop-color="#7fd8ff"/><stop offset="1" stop-color="#1e90e0"/></linearGradient></defs></svg><svg class="a" style="left:159px;top:688px;" width="25" height="25" viewBox="0 0 25 25"><rect x="3" y="1" width="20" height="15" fill="#eaeaea"/><rect x="5" y="3" width="16" height="11" fill="#1b3fb5"/><rect x="1" y="6" width="17" height="6" fill="#d8ecff" stroke="#5a8fd0" stroke-width="0.8"/><path d="M3 8H16M3 10H16" stroke="#3a6fc8" stroke-width="0.8" stroke-dasharray="1 1"/><ellipse cx="13" cy="21" rx="6" ry="2.5" fill="#c8c8c8"/><rect x="12" y="16" width="2" height="4" fill="#bbb"/></svg><svg class="a" style="left:210px;top:691px;" width="23" height="19" viewBox="0 0 23 19"><path d="M0 1H8L10 3H23V19H0Z" fill="#f0c040"/><path d="M0 5H23V19H0Z" fill="#ffd65c"/><rect x="5.5" y="11" width="12" height="8" fill="#3a8ee6"/><rect x="8.5" y="14" width="6" height="5" fill="#ffd65c"/></svg><div class="a" style="left:246px;top:680px;width:48px;height:40px;background:#2a3a48"></div><div class="a" style="left:259px;top:688px;width:22px;height:22px;background:#001e36;border-radius:4px"></div><div class="t" style="left:261px;top:693px;color:#31a8ff;font-size:13px;font-weight:bold;line-height:13px">Ps</div><svg class="a" style="left:307px;top:688px;" width="24" height="24" viewBox="0 0 24 24"><circle cx="12" cy="12" r="11.5" fill="#1e7be0"/><path d="M14 4L7 13H11L9.5 20L17 10.5H12.5Z" fill="#fff"/></svg><div class="a" style="left:201px;top:718px;width:40px;height:2px;background:#76b9ed"></div><div class="a" style="left:246px;top:718px;width:48px;height:2px;background:#76b9ed"></div><div class="a" style="left:299px;top:718px;width:40px;height:2px;background:#76b9ed"></div><svg class="a" style="left:1022px;top:695px;" width="13" height="8" viewBox="0 0 13 8"><path d="M0.5 7.5L6.5 1.5L12.5 7.5" fill="none" stroke="#f0f0f0" stroke-width="1.1"/></svg><svg class="a" style="left:1043px;top:693px;" width="18" height="14" viewBox="0 0 18 14"><path d="M1 5H4L8 1V13L4 9H1Z" fill="none" stroke="#f0f0f0" stroke-width="1"/><path d="M10.5 4.5Q12 7 10.5 9.5M13 3Q15 7 13 11M15.5 1.5Q18 7 15.5 12.5" fill="none" stroke="#f0f0f0" stroke-width="1"/></svg><svg class="a" style="left:1068px;top:693px;" width="24" height="14" viewBox="0 0 24 14"><rect x="0.7" y="0.7" width="22.6" height="12.6" fill="none" stroke="#f0f0f0" stroke-width="1.2"/><rect x="3.0" y="3.5" width="1.2" height="1.2" fill="#f0f0f0"/><rect x="3.0" y="6.5" width="1.2" height="1.2" fill="#f0f0f0"/><rect x="5.5" y="3.5" width="1.2" height="1.2" fill="#f0f0f0"/><rect x="5.5" y="6.5" width="1.2" height="1.2" fill="#f0f0f0"/><rect x="8.0" y="3.5" width="1.2" height="1.2" fill="#f0f0f0"/><rect x="8.0" y="6.5" width="1.2" height="1.2" fill="#f0f0f0"/><rect x="10.5" y="3.5" width="1.2" height="1.2" fill="#f0f0f0"/><rect x="10.5" y="6.5" width="1.2" height="1.2" fill="#f0f0f0"/><rect x="13.0" y="3.5" width="1.2" height="1.2" fill="#f0f0f0"/><rect x="13.0" y="6.5" width="1.2" height="1.2" fill="#f0f0f0"/><rect x="15.5" y="3.5" width="1.2" height="1.2" fill="#f0f0f0"/><rect x="15.5" y="6.5" width="1.2" height="1.2" fill="#f0f0f0"/><rect x="18.0" y="3.5" width="1.2" height="1.2" fill="#f0f0f0"/><rect x="18.0" y="6.5" width="1.2" height="1.2" fill="#f0f0f0"/><rect x="4" y="9.5" width="16" height="1.2" fill="#f0f0f0"/></svg><div class="t" style="left:1100px;top:692px;color:#f0f0f0;font-size:14px;line-height:15px">英</div><svg class="a" style="left:1126px;top:690px;" width="20" height="20" viewBox="0 0 20 20"><g transform="rotate(-15 10.0 10.0)"><rect x="2.4" y="2.4" width="15.2" height="15.2" rx="2.4" fill="#f15a24"/></g><path d="M14.399999999999999 6.6000000000000005Q10.0 4.4 6.0 7.199999999999999Q4.4 10.0 10.0 10.4Q14.399999999999999 11.0 12.4 13.200000000000001Q9.0 15.2 5.2 13.200000000000001" fill="none" stroke="#fff" stroke-width="2.6" stroke-linecap="round"/></svg><div class="t" style="left:1175px;top:683px;color:#f4f4f4;font-size:14px;line-height:14px;letter-spacing:-0.6px">14:19</div><div class="t" style="left:1160px;top:703px;color:#f4f4f4;font-size:14px;line-height:14px;letter-spacing:-0.15px">2023/9/30</div><svg class="a" style="left:1238px;top:691px;" width="28" height="28" viewBox="0 0 28 28"><path d="M1 1H17V14H8.5L6 16.5V14H1Z" fill="#f4f4f4"/><path d="M4 4.5H14M4 7.5H14M4 10.5H10" stroke="#050d1c" stroke-width="1.3"/><circle cx="16.8" cy="16.3" r="8" fill="#2b2b2b" stroke="#777" stroke-width="0.9"/></svg><div class="t" style="left:1251px;top:703px;color:#f8f8f8;font-size:11px;line-height:12px;font-weight:bold">3</div><div class="a" style="left:1275px;top:680px;width:1px;height:40px;background:#3c4650"></div></div><div class="h" style="left:1280px"><div class="a" style="left:0px;top:0px;width:1280px;height:24px;background:#2c2c2c"></div><div class="a" style="left:0px;top:24px;width:1280px;height:1px;background:#1f1f1f"></div><div class="a" style="left:5px;top:4px;width:16px;height:15px;background:#001e36;border-radius:2px"></div><div class="t" style="left:8.5px;top:7px;font-size:9px;font-weight:bold;color:#31a8ff;line-height:10px;letter-spacing:-0.4px">Ps</div><div class="t" style="left:35px;top:5px;color:#dcdcdc;font-size:12px;line-height:13px;letter-spacing:-0.3px">文件(F)</div><div class="t" style="left:84px;top:5px;color:#dcdcdc;font-size:12px;line-height:13px;letter-spacing:-0.3px">编辑(E)</div><div class="t" style="left:133px;top:5px;color:#dcdcdc;font-size:12px;line-height:13px;letter-spacing:-0.3px">图像(I)</div><div class="t" style="left:179px;top:5px;color:#dcdcdc;font-size:12px;line-height:13px;letter-spacing:-0.3px">图层(L)</div><div class="t" style="left:228px;top:5px;color:#dcdcdc;font-size:12px;line-height:13px;letter-spacing:-0.3px">文字(Y)</div><div class="t" style="left:278px;top:5px;color:#dcdcdc;font-size:12px;line-height:13px;letter-spacing:-0.3px">选择(S)</div><div class="t" style="left:328px;top:5px;color:#dcdcdc;font-size:12px;line-height:13px;letter-spacing:-0.3px">滤镜(T)</div><div class="t" style="left:378px;top:5px;color:#dcdcdc;font-size:12px;line-height:13px;letter-spacing:-0.3px">3D(D)</div><div class="t" style="left:421px;top:5px;color:#dcdcdc;font-size:12px;line-height:13px;letter-spacing:-0.3px">视图(V)</div><div class="t" style="left:472px;top:5px;color:#dcdcdc;font-size:12px;line-height:13px;letter-spacing:-0.3px">增效工具</div><div class="t" style="left:532px;top:5px;color:#dcdcdc;font-size:12px;line-height:13px;letter-spacing:-0.3px">窗口(W)</div><div class="t" style="left:586px;top:5px;color:#dcdcdc;font-size:12px;line-height:13px;letter-spacing:-0.3px">帮助(H)</div><div class="a" style="left:1174px;top:-3px;width:103px;height:21px;border:1px solid #3d3d3d;border-radius:3px"></div><div class="a" style="left:1202px;top:0px;width:1px;height:18px;background:#3d3d3d"></div><div class="a" style="left:1229px;top:0px;width:1px;height:18px;background:#3d3d3d"></div><div class="a" style="left:1183px;top:11px;width:10px;height:3px;background:#9a9a9a"></div><svg class="a" style="left:1210px;top:5px;" width="13" height="11" viewBox="0 0 13 11"><path d="M4 1h8v7h-3" fill="none" stroke="#9a9a9a" stroke-width="1.6"/><rect x="1" y="4" width="8" height="6" fill="none" stroke="#9a9a9a" stroke-width="1.6"/></svg><svg class="a" style="left:1248px;top:5px;" width="10" height="8" viewBox="0 0 10 8"><path d="M0.5 0.5L9.5 7.5M9.5 0.5L0.5 7.5" stroke="#9a9a9a" stroke-width="2"/></svg><div class="a" style="left:0px;top:25px;width:1280px;height:35px;background:#323232"></div><div class="a" style="left:0px;top:25px;width:1px;height:35px;background:#262626"></div><div class="a" style="left:1279px;top:25px;width:1px;height:35px;background:#262626"></div><svg class="a" style="left:5px;top:33px;" width="2" height="20" viewBox="0 0 2 20"><path d="M1 0V20" stroke="#262626" stroke-width="2" stroke-dasharray="1 1"/></svg><div class="a" style="left:53px;top:30px;width:1px;height:25px;background:#262626"></div><div class="a" style="left:102px;top:30px;width:1px;height:25px;background:#262626"></div><div class="a" style="left:146px;top:30px;width:1px;height:25px;background:#262626"></div><div class="a" style="left:451px;top:30px;width:1px;height:25px;background:#262626"></div><div class="a" style="left:703px;top:30px;width:1px;height:25px;background:#262626"></div><div class="a" style="left:794px;top:30px;width:1px;height:25px;background:#262626"></div><div class="a" style="left:833px;top:30px;width:1px;height:25px;background:#262626"></div><svg class="a" style="left:20px;top:35px;" width="17" height="16" viewBox="0 0 17 16"><path d="M8.5 0.5L0 8H2.5V15H7V10.5H10V15H14.5V8H17Z" fill="#8f8f8f"/></svg><svg class="a" style="left:63px;top:35px;" width="14" height="15" viewBox="0 0 14 15"><path d="M1 1H13V4H12V2.5H8V13H10V14.5H4V13H6V2.5H2V4H1Z" fill="#8c8c8c"/></svg><svg class="a" style="left:87px;top:42px;" width="7" height="4" viewBox="0 0 7 4"><path d="M0.5 0.5 L3.5 3.5 L6.5 0.5" fill="none" stroke="#555555" stroke-width="1.2"/></svg><svg class="a" style="left:116px;top:34px;" width="19" height="18" viewBox="0 0 19 18"><path d="M2.5 1V12M0.5 9.5L2.5 12.5L4.5 9.5" fill="none" stroke="#d4d4d4" stroke-width="1.3"/><path d="M5 1H15V3.6H14V2.4H11V11.5H12.5V12.6H7.5V11.5H9V2.4H6V3.6H5Z" fill="#d4d4d4"/><path d="M5 15.5H17M14.5 13.5L17.5 15.5L14.5 17.5" fill="none" stroke="#d4d4d4" stroke-width="1.3"/></svg><div class="a" style="left:152px;top:32px;width:145px;height:20px;background:#262626;border:1px solid #3b3b3b;border-radius:3px"></div><div class="a" style="left:280px;top:33px;width:1px;height:18px;background:#3b3b3b"></div><div class="t" style="left:155px;top:36px;color:#ececec;font-size:12px;letter-spacing:-0.4px">Sportrop</div><svg class="a" style="left:285px;top:40px;" width="8" height="5" viewBox="0 0 8 5"><path d="M0.5 0.5 L4.0 4.5 L7.5 0.5" fill="none" stroke="#a0a0a0" stroke-width="1.2"/></svg><div class="a" style="left:305px;top:32px;width:140px;height:20px;background:#262626;border:1px solid #3b3b3b;border-radius:3px"></div><div class="a" style="left:429px;top:33px;width:1px;height:18px;background:#3b3b3b"></div><div class="t" style="left:308px;top:36px;color:#ececec;font-size:12px;letter-spacing:-0.3px">Regular</div><svg class="a" style="left:434px;top:40px;" width="8" height="5" viewBox="0 0 8 5"><path d="M0.5 0.5 L4.0 4.5 L7.5 0.5" fill="none" stroke="#a0a0a0" stroke-width="1.2"/></svg><svg class="a" style="left:457px;top:34px;" width="20" height="16" viewBox="0 0 20 16"><path d="M8 1H19V3.8H18V2.5H14.6V13.5H16V14.8H11V13.5H12.4V2.5H9V3.8H8Z" fill="#d4d4d4"/><path d="M1 8H8V9.5H7.5V9H5.2V14H6V15H3V14H3.8V9H1.5V9.5H1Z" fill="#d4d4d4"/></svg><div class="a" style="left:486px;top:32px;width:79px;height:20px;background:#262626;border:1px solid #3b3b3b;border-radius:3px"></div><div class="a" style="left:549px;top:33px;width:1px;height:18px;background:#3b3b3b"></div><div class="t" style="left:489px;top:36px;color:#ececec;font-size:12px;letter-spacing:-0.3px">21.75 点</div><svg class="a" style="left:553px;top:40px;" width="8" height="5" viewBox="0 0 8 5"><path d="M0.5 0.5 L4.0 4.5 L7.5 0.5" fill="none" stroke="#a0a0a0" stroke-width="1.2"/></svg><div class="t" style="left:575px;top:33px;color:#c8c8c8;font-size:11px;line-height:11px">a</div><div class="t" style="left:581px;top:37px;color:#c8c8c8;font-size:14px;line-height:12px;font-family:Liberation Serif,serif">a</div><div class="a" style="left:602px;top:32px;width:96px;height:22px;background:#262626;border:1px solid #3b3b3b;border-radius:3px"></div><div class="t" style="left:609px;top:37px;color:#ececec;font-size:12px;letter-spacing:-0.55px">Windows LCD</div><svg class="a" style="left:687px;top:41px;" width="7" height="4" viewBox="0 0 7 4"><path d="M0.5 0.5 L3.5 3.5 L6.5 0.5" fill="none" stroke="#a0a0a0" stroke-width="1.2"/></svg><div class="a" style="left:737px;top:30px;width:24px;height:25px;background:#1f1f1f;border-radius:3px"></div><svg class="a" style="left:716px;top:36px;" width="15" height="14" viewBox="0 0 15 14"><rect x="0" y="0" width="13" height="1.1" fill="#dcdcdc"/><rect x="0" y="2" width="10" height="1.1" fill="#dcdcdc"/><rect x="0" y="4" width="14" height="1.1" fill="#dcdcdc"/><rect x="0" y="6" width="11" height="1.1" fill="#dcdcdc"/><rect x="0" y="8" width="14" height="1.1" fill="#dcdcdc"/><rect x="0" y="10" width="10" height="1.1" fill="#dcdcdc"/><rect x="0" y="12" width="14" height="1.1" fill="#dcdcdc"/></svg><svg class="a" style="left:742px;top:36px;" width="15" height="14" viewBox="0 0 15 14"><rect x="1" y="0" width="12" height="1.1" fill="#dcdcdc"/><rect x="2" y="2" width="10" height="1.1" fill="#dcdcdc"/><rect x="0" y="4" width="14" height="1.1" fill="#dcdcdc"/><rect x="2" y="6" width="10" height="1.1" fill="#dcdcdc"/><rect x="0" y="8" width="14" height="1.1" fill="#dcdcdc"/><rect x="1" y="10" width="12" height="1.1" fill="#dcdcdc"/><rect x="2" y="12" width="10" height="1.1" fill="#dcdcdc"/></svg><svg class="a" style="left:768px;top:36px;" width="15" height="14" viewBox="0 0 15 14"><rect x="1" y="0" width="13" height="1.1" fill="#dcdcdc"/><rect x="4" y="2" width="10" height="1.1" fill="#dcdcdc"/><rect x="0" y="4" width="14" height="1.1" fill="#dcdcdc"/><rect x="3" y="6" width="11" height="1.1" fill="#dcdcdc"/><rect x="0" y="8" width="14" height="1.1" fill="#dcdcdc"/><rect x="4" y="10" width="10" height="1.1" fill="#dcdcdc"/><rect x="0" y="12" width="14" height="1.1" fill="#dcdcdc"/></svg><div class="a" style="left:800px;top:33px;width:28px;height:18px;background:#ffffff;border:1px solid #111"></div><svg class="a" style="left:844px;top:34px;" width="15" height="15" viewBox="0 0 15 15"><circle cx="7.5" cy="7.5" r="6.3" fill="none" stroke="#d0d0d0" stroke-width="1.8"/><path d="M3.2 3.2L11.8 11.8" stroke="#d0d0d0" stroke-width="1.8"/></svg><svg class="a" style="left:878px;top:35px;" width="17" height="14" viewBox="0 0 17 14"><path d="M1 7.5L5.5 12.5L16 1" fill="none" stroke="#d8d8d8" stroke-width="1.8"/></svg><svg class="a" style="left:1211px;top:35px;" width="17" height="17" viewBox="0 0 17 17"><circle cx="6.5" cy="6.5" r="5.3" fill="none" stroke="#dcdcdc" stroke-width="1.6"/><path d="M10.3 10.3L15 15" stroke="#dcdcdc" stroke-width="2"/></svg><svg class="a" style="left:1241px;top:37px;" width="17" height="14" viewBox="0 0 17 14"><rect x="0.75" y="0.75" width="15.5" height="12.5" fill="none" stroke="#9a9a9a" stroke-width="1.5"/><rect x="0" y="0" width="17" height="2.2" fill="#9a9a9a"/><rect x="2.5" y="3.5" width="3" height="2.2" fill="none" stroke="#9a9a9a" stroke-width="0.9"/><rect x="2.5" y="6.3" width="3" height="2.2" fill="none" stroke="#9a9a9a" stroke-width="0.9"/><rect x="2.5" y="9.1" width="3" height="2.2" fill="none" stroke="#9a9a9a" stroke-width="0.9"/></svg><svg class="a" style="left:1267px;top:40px;" width="8" height="4" viewBox="0 0 8 4"><path d="M0.5 0.5 L4.0 3.5 L7.5 0.5" fill="none" stroke="#4e4e4e" stroke-width="1.2"/></svg><div class="a" style="left:0px;top:60px;width:1280px;height:21px;background:#262626"></div><div class="a" style="left:0px;top:73px;width:39px;height:607px;background:#2f2f2f"></div><div class="a" style="left:39px;top:60px;width:2px;height:620px;background:#212121"></div><svg class="a" style="left:5px;top:65px;" width="9" height="6" viewBox="0 0 9 6"><path d="M0.5 0.5L3 3L0.5 5.5M4.5 0.5L7 3L4.5 5.5" fill="none" stroke="#c8c8c8" stroke-width="1.1"/></svg><svg class="a" style="left:10px;top:77px;" width="20" height="4" viewBox="0 0 20 4"><rect x="0" y="0" width="1" height="4" fill="#444"/><rect x="2" y="0" width="1" height="4" fill="#444"/><rect x="4" y="0" width="1" height="4" fill="#444"/><rect x="6" y="0" width="1" height="4" fill="#444"/><rect x="8" y="0" width="1" height="4" fill="#444"/><rect x="10" y="0" width="1" height="4" fill="#444"/><rect x="12" y="0" width="1" height="4" fill="#444"/><rect x="14" y="0" width="1" height="4" fill="#444"/><rect x="16" y="0" width="1" height="4" fill="#444"/><rect x="18" y="0" width="1" height="4" fill="#444"/></svg><div class="a" style="left:41px;top:61px;width:238px;height:19px;background:#282828"></div><div class="a" style="left:280px;top:61px;width:215px;height:19px;background:#323232"></div><div class="t" style="left:51px;top:65px;color:#8c8c8c;font-size:12px;line-height:13px;letter-spacing:-0.25px">未标题-1.psd @ 195% (12:00, RGB/8) *</div><svg class="a" style="left:262px;top:67px;" width="7" height="7" viewBox="0 0 7 7"><path d="M0.5 0.5L6.5 6.5M6.5 0.5L0.5 6.5" stroke="#8c8c8c" stroke-width="1"/></svg><div class="t" style="left:289px;top:65px;color:#e4e4e4;font-size:12px;line-height:13px;letter-spacing:-0.27px">未标题-1 @ 234% (12:00, RGB/8) *</div><svg class="a" style="left:478px;top:67px;" width="7" height="7" viewBox="0 0 7 7"><path d="M0.5 0.5L6.5 6.5M6.5 0.5L0.5 6.5" stroke="#9a9a9a" stroke-width="1"/></svg><div class="a" style="left:4px;top:428px;width:31px;height:24px;background:#1e1e1e;border-radius:3px"></div><svg class="a" style="left:0px;top:0px;" width="40" height="680" viewBox="0 0 40 680"><path d="M18.5 97V108M13 102.5H24" stroke="#d2d2d2" stroke-width="1.3"/><path d="M18.5 95L15.5 98.5H21.5ZM18.5 110L15.5 106.5H21.5ZM11 102.5L14.5 99.5V105.5ZM26 102.5L22.5 99.5V105.5Z" fill="#d2d2d2"/><rect x="11.5" y="121.5" width="15" height="12" fill="none" stroke="#d2d2d2" stroke-width="1.4" stroke-dasharray="3.2 2.2" stroke-dashoffset="1.6"/><ellipse cx="20" cy="152.5" rx="7.3" ry="4.8" transform="rotate(-18 20 152.5)" fill="none" stroke="#d2d2d2" stroke-width="1.2"/><circle cx="14.8" cy="157.6" r="1.8" fill="none" stroke="#d2d2d2" stroke-width="1.1"/><path d="M15.5 159.5L16 163" stroke="#d2d2d2" stroke-width="1.1"/><path d="M13.5 186L22 177.8" stroke="#d2d2d2" stroke-width="3.6" stroke-linecap="round"/><path d="M20.2 178.2L21.6 179.6" stroke="#2f2f2f" stroke-width="1"/><path d="M18.6 171.5V175.5M16.6 173.5H20.6M26.4 171V176M23.9 173.5H28.9M27.1 178V182M25.1 180H29.1" stroke="#d2d2d2" stroke-width="1.1"/><circle cx="13" cy="206.3" r="4.6" fill="none" stroke="#d2d2d2" stroke-width="1.2" stroke-dasharray="1 1.3"/><path d="M27.8 200.5L22 206.5Q19 208.5 18.3 211Q21.5 211 23.3 208Z" fill="#d2d2d2"/><path d="M14.5 223V236.5H28M9.5 226.5H23.5V239" fill="none" stroke="#d2d2d2" stroke-width="2"/><path d="M13.5 261.5L24.5 253" stroke="#d2d2d2" stroke-width="5.5" stroke-linecap="round"/><circle cx="18" cy="256.5" r="0.8" fill="#2f2f2f"/><circle cx="20" cy="258" r="0.8" fill="#2f2f2f"/><circle cx="17" cy="259" r="0.8" fill="#2f2f2f"/><circle cx="19.5" cy="255" r="0.8" fill="#2f2f2f"/><path d="M10.5 258A5.5 5.5 0 0 1 20 250" fill="none" stroke="#d2d2d2" stroke-width="1.2" stroke-dasharray="1.4 1.2"/><rect x="12.5" y="278.5" width="11" height="11" fill="#8a8a8a" stroke="#d2d2d2" stroke-width="1"/><path d="M15 276V278M18 276V278M21 276V278M15 290V292M18 290V292M21 290V292M10 281H12M10 284H12M10 287H12M24 281H26M24 284H26M24 287H26" stroke="#d2d2d2" stroke-width="0.9"/><path d="M11.5 317.5L12.5 313L23 302.5L26.5 306L16 316.5Z" fill="none" stroke="#d2d2d2" stroke-width="1.2"/><path d="M12.5 313L16 316.5" stroke="#d2d2d2" stroke-width="1"/><circle cx="19.4" cy="331.5" r="3" fill="#d2d2d2"/><rect x="18.2" y="333" width="2.4" height="3" fill="#d2d2d2"/><path d="M12 339.5Q12 336 15 336H24Q27 336 27 339.5Z" fill="#d2d2d2"/><rect x="12" y="341" width="15" height="1.2" fill="#d2d2d2"/><path d="M11.5 364L19 356.5L25 362.5L20.5 367H14.5Z" fill="none" stroke="#d2d2d2" stroke-width="1.2"/><path d="M15.5 360L22 353.5L28 359.5L21.5 366Z" fill="#d2d2d2"/><path d="M20.5 367H28" stroke="#d2d2d2" stroke-width="1.1"/><path d="M11.5 385L18 379L25 386L18.5 392.5Z" fill="none" stroke="#d2d2d2" stroke-width="1.3"/><path d="M15 381V386" stroke="#d2d2d2" stroke-width="1"/><circle cx="15" cy="386.5" r="1.2" fill="#d2d2d2"/><path d="M24 387Q26.5 390 25.5 392Q23 392 24 387Z" fill="#d2d2d2"/><path d="M11.5 421.5L13.5 413.5L22 406L27 411L19.5 419.5Z" fill="none" stroke="#d2d2d2" stroke-width="1.3"/><circle cx="17.5" cy="415.5" r="1.4" fill="none" stroke="#d2d2d2" stroke-width="1"/><path d="M11.5 421.5L16.5 416.5M21 405L28 412" stroke="#d2d2d2" stroke-width="1.2"/><path d="M14.4 433.5H24.4V437H23.3V435H20.4V445.8H22V447.3H16.8V445.8H18.4V435H15.5V437H14.4Z" fill="#e4e4e4"/><rect x="11.5" y="459.5" width="15" height="12.5" fill="#555" stroke="#d2d2d2" stroke-width="1.3"/><circle cx="17.5" cy="490" r="5.6" fill="none" stroke="#d2d2d2" stroke-width="1.4"/><path d="M21.5 494L26.5 499" stroke="#d2d2d2" stroke-width="2"/><circle cx="13" cy="518.2" r="1.7" fill="#d2d2d2"/><circle cx="19" cy="518.2" r="1.7" fill="#d2d2d2"/><circle cx="25" cy="518.2" r="1.7" fill="#d2d2d2"/><path d="M32 159V162H29Z" fill="#9a9a9a"/><path d="M32 262V265H29Z" fill="#9a9a9a"/><path d="M32 317V320H29Z" fill="#9a9a9a"/><path d="M32 342V345H29Z" fill="#9a9a9a"/><path d="M32 368V371H29Z" fill="#9a9a9a"/><path d="M32 394V397H29Z" fill="#9a9a9a"/><path d="M32 419V422H29Z" fill="#9a9a9a"/><path d="M32 446V449H29Z" fill="#9a9a9a"/><path d="M32 472V475H29Z" fill="#9a9a9a"/><path d="M32 524V527H29Z" fill="#9a9a9a"/><path d="M32 634V637H29Z" fill="#9a9a9a"/><rect x="8.5" y="541.5" width="6.5" height="6.5" fill="#fff" stroke="#111" stroke-width="1"/><rect x="3.5" y="536.5" width="8" height="8" fill="#000" stroke="#bbb" stroke-width="1"/><path d="M25.5 540.5Q30.5 539 31 544.5" fill="none" stroke="#d2d2d2" stroke-width="1.5"/><path d="M23 540.5L26 537.5V543.5ZM31 547.5L28 544H34Z" fill="#d2d2d2"/><rect x="14.5" y="562" width="19" height="19.5" fill="#fff" stroke="#1a1a1a" stroke-width="1"/><rect x="4.5" y="552.5" width="19" height="19" fill="#000" stroke="#eaeaea" stroke-width="1.5"/><rect x="10.5" y="589" width="16.5" height="17" fill="none" stroke="#d2d2d2" stroke-width="1.3"/><circle cx="18.7" cy="597.5" r="4.5" fill="none" stroke="#d2d2d2" stroke-width="1" stroke-dasharray="0.9 1.1"/><rect x="15.5" y="619.5" width="11.5" height="8.5" fill="none" stroke="#d2d2d2" stroke-width="1.2"/><rect x="10.5" y="622.5" width="11" height="9" fill="#2f2f2f" stroke="#d2d2d2" stroke-width="1.2"/></svg><div class="a" style="left:41px;top:81px;width:958px;height:582px;background:#1b1b1b"></div><div class="a" style="left:239px;top:91px;width:562px;height:562px;background:#000"></div><div class="a" style="left:491px;top:335px;width:49px;height:86px;background:#fff"></div><svg class="a" style="left:-1280px;top:0px;" width="2560" height="720" viewBox="0 0 2560 720"><g fill="none" stroke="#0c0c0c" stroke-width="2.2"><rect x="1777.6" y="342.6" width="37.2" height="54.6" rx="5" ry="5"/><rect x="1782.2" y="347.2" width="25.6" height="18" rx="2.5" ry="2.5"/><rect x="1782.2" y="371" width="25.6" height="20.6" rx="2.5" ry="2.5"/></g><path d="M1779 345L1783 349M1813 345L1808 349M1779 395L1783 390M1813 395L1808 390M1778 368.5H1783M1809 368.5H1815" stroke="#555" stroke-width="1.3"/><rect x="1788" y="366.5" width="4" height="4" fill="#999"/><rect x="1774" y="350" width="3" height="15" fill="#6a6a6a"/><rect x="1774" y="375" width="3" height="15" fill="#6a6a6a"/><rect x="1816" y="352" width="2" height="13" fill="#888"/><rect x="1816" y="375" width="2" height="15" fill="#888"/><rect x="1768.5" y="332.5" width="5" height="5" fill="none" stroke="#fff" stroke-width="1.2"/><rect x="1793.0" y="332.5" width="5" height="5" fill="none" stroke="#fff" stroke-width="1.2"/><rect x="1817.5" y="332.5" width="5" height="5" fill="none" stroke="#fff" stroke-width="1.2"/><rect x="1768.5" y="375.25" width="5" height="5" fill="none" stroke="#fff" stroke-width="1.2"/><rect x="1817.5" y="375.25" width="5" height="5" fill="none" stroke="#fff" stroke-width="1.2"/><rect x="1768.5" y="418.0" width="5" height="5" fill="none" stroke="#fff" stroke-width="1.2"/><rect x="1793.0" y="418.0" width="5" height="5" fill="none" stroke="#fff" stroke-width="1.2"/><rect x="1817.5" y="418.0" width="5" height="5" fill="none" stroke="#fff" stroke-width="1.2"/></svg><svg class="a" style="left:505px;top:449px;" width="28" height="27" viewBox="0 0 28 27"><path d="M0 11Q0.5 7.5 4 8Q6 8 6.5 10L7.5 15.5L23 1Q25.5 -0.5 26 2L26 4.5L7 23.5Q5 25.5 3 24.5Q1 23 0.5 20Z" fill="#11ee22"/></svg><div class="a" style="left:999px;top:81px;width:16px;height:582px;background:#282828"></div><div class="a" style="left:1001px;top:263px;width:12px;height:213px;background:#484848"></div><svg class="a" style="left:1004px;top:89px;" width="8" height="5" viewBox="0 0 8 5"><path d="M0.5 4.5 L4.0 0.5 L7.5 4.5" fill="none" stroke="#808080" stroke-width="1.1"/></svg><svg class="a" style="left:1004px;top:650px;" width="8" height="5" viewBox="0 0 8 5"><path d="M0.5 0.5 L4.0 4.5 L7.5 0.5" fill="none" stroke="#808080" stroke-width="1.1"/></svg><div class="a" style="left:41px;top:663px;width:958px;height:17px;background:#2a2a2a"></div><div class="a" style="left:42px;top:663px;width:48px;height:17px;background:#262626"></div><div class="t" style="left:44px;top:666px;color:#eeeeee;font-size:12px;letter-spacing:-0.3px">234.17%</div><div class="t" style="left:104px;top:665px;color:#b4b4b4;font-size:12px;line-height:13px;letter-spacing:-0.43px">240 像素 x 240 像素 (96 ppi)</div><svg class="a" style="left:263px;top:666px;" width="6" height="11" viewBox="0 0 6 11"><path d="M1 1L5 5.5L1 10" fill="none" stroke="#b0b0b0" stroke-width="1.1"/></svg><div class="a" style="left:273px;top:663px;width:1px;height:17px;background:#262626"></div><svg class="a" style="left:283px;top:667px;" width="5" height="9" viewBox="0 0 5 9"><path d="M4.5 0.5L0.8 4.5L4.5 8.5" fill="none" stroke="#8a8a8a" stroke-width="1.1"/></svg><div class="a" style="left:491px;top:665px;width:291px;height:12px;background:#4a4a4a"></div><svg class="a" style="left:987px;top:667px;" width="5" height="9" viewBox="0 0 5 9"><path d="M0.5 0.5L4.2 4.5L0.5 8.5" fill="none" stroke="#8a8a8a" stroke-width="1.1"/></svg><div class="a" style="left:999px;top:663px;width:16px;height:17px;background:#2e2e2e"></div><div class="a" style="left:1015px;top:60px;width:2px;height:620px;background:#232323"></div><div class="a" style="left:1017px;top:60px;width:1px;height:620px;background:#2a2a2a"></div><div class="a" style="left:1018px;top:60px;width:262px;height:12px;background:#262626"></div><svg class="a" style="left:1266px;top:64px;" width="9" height="6" viewBox="0 0 9 6"><path d="M0.5 0.5L3 3L0.5 5.5M4.5 0.5L7 3L4.5 5.5" fill="none" stroke="#c8c8c8" stroke-width="1.1"/></svg><div class="a" style="left:1018px;top:72px;width:260px;height:17px;background:#282828"></div><div class="a" style="left:1018px;top:72px;width:35px;height:17px;background:#323232"></div><div class="a" style="left:1088px;top:73px;width:1px;height:16px;background:#2f2f2f"></div><div class="a" style="left:1124px;top:73px;width:1px;height:16px;background:#2f2f2f"></div><div class="a" style="left:1160px;top:73px;width:1px;height:16px;background:#2f2f2f"></div><div class="t" style="left:1025px;top:73px;color:#eeeeee;font-size:12px;line-height:13px">图层</div><div class="t" style="left:1059px;top:73px;color:#999999;font-size:12px;line-height:13px">通道</div><div class="t" style="left:1096px;top:73px;color:#999999;font-size:12px;line-height:13px">动作</div><div class="t" style="left:1131px;top:73px;color:#999999;font-size:12px;line-height:13px">属性</div><svg class="a" style="left:1264px;top:77px;" width="11" height="8" viewBox="0 0 11 8"><rect x="0" y="0.3" width="11" height="1" fill="#bdbdbd"/><rect x="0" y="2.5" width="11" height="1" fill="#bdbdbd"/><rect x="0" y="4.7" width="11" height="1" fill="#bdbdbd"/><rect x="0" y="6.9" width="11" height="1" fill="#bdbdbd"/></svg><div class="a" style="left:1018px;top:89px;width:260px;height:94px;background:#323232"></div><div class="a" style="left:1022px;top:98px;width:86px;height:23px;background:#262626;border:1px solid #3b3b3b;border-radius:3px"></div><svg class="a" style="left:1028px;top:105px;" width="12" height="12" viewBox="0 0 12 12"><circle cx="4.8" cy="4.8" r="3.6" fill="none" stroke="#e8e8e8" stroke-width="1.6"/><path d="M7.5 7.5L11 11" stroke="#e8e8e8" stroke-width="2.2"/></svg><div class="t" style="left:1044px;top:103px;color:#6c6c6c;font-size:12px;line-height:13px">类型</div><svg class="a" style="left:1097px;top:109px;" width="7" height="4" viewBox="0 0 7 4"><path d="M0.5 0.5 L3.5 3.5 L6.5 0.5" fill="none" stroke="#555" stroke-width="1.2"/></svg><svg class="a" style="left:1124px;top:103px;" width="13" height="11" viewBox="0 0 13 11"><rect x="0.6" y="0.6" width="11.8" height="9.8" fill="none" stroke="#d2d2d2" stroke-width="1.2"/><path d="M2.5 8.5L5 5L7 7L8.5 5.5L10.5 8.5Z" fill="#d2d2d2"/></svg><svg class="a" style="left:1149px;top:102px;" width="12" height="12" viewBox="0 0 12 12"><circle cx="6" cy="6" r="5" fill="none" stroke="#d2d2d2" stroke-width="1.3"/><path d="M9.5 2.5A5 5 0 0 1 2.5 9.5Z" fill="#d2d2d2"/></svg><svg class="a" style="left:1173px;top:102px;" width="12" height="12" viewBox="0 0 12 12"><path d="M0.5 0.5H11.5V3.8H10.5V2.3H7.2V10H8.7V11.5H3.3V10H4.8V2.3H1.5V3.8H0.5Z" fill="#d2d2d2"/></svg><svg class="a" style="left:1197px;top:102px;" width="12" height="12" viewBox="0 0 12 12"><rect x="1.5" y="1.5" width="9" height="9" fill="none" stroke="#d2d2d2" stroke-width="1.1"/><g fill="#323232" stroke="#d2d2d2" stroke-width="0.9"><rect x="0" y="0" width="3" height="3"/><rect x="9" y="0" width="3" height="3"/><rect x="0" y="9" width="3" height="3"/><rect x="9" y="9" width="3" height="3"/></g></svg><svg class="a" style="left:1221px;top:102px;" width="12" height="12" viewBox="0 0 12 12"><path d="M4 0.5H8.5L11.5 3.5V10.5H4Z" fill="none" stroke="#d2d2d2" stroke-width="1"/><rect x="1" y="5.5" width="6" height="6" fill="#d2d2d2"/></svg><svg class="a" style="left:1248px;top:99px;" width="11" height="21" viewBox="0 0 11 21"><rect x="1" y="5" width="9" height="15" rx="4.5" fill="none" stroke="#555" stroke-width="1"/><circle cx="5.5" cy="5" r="4.5" fill="#d8d8d8"/></svg><div class="a" style="left:1018px;top:122px;width:260px;height:1px;background:#2b2b2b"></div><div class="a" style="left:1021px;top:127px;width:118px;height:23px;background:#262626;border:1px solid #3b3b3b;border-radius:3px"></div><div class="t" style="left:1031px;top:132px;color:#eeeeee;font-size:12px;line-height:13px">正常</div><svg class="a" style="left:1128px;top:137px;" width="8" height="5" viewBox="0 0 8 5"><path d="M0.5 0.5 L4.0 4.5 L7.5 0.5" fill="none" stroke="#b0b0b0" stroke-width="1.2"/></svg><div class="t" style="left:1146px;top:132px;color:#8a8a8a;font-size:12px;line-height:13px">不透明度:</div><div class="a" style="left:1202px;top:127px;width:55px;height:19px;background:#262626;border:1px solid #3b3b3b;border-radius:3px"></div><div class="a" style="left:1241px;top:128px;width:1px;height:17px;background:#3b3b3b"></div><div class="t" style="left:1207px;top:131px;color:#ececec;font-size:12px;letter-spacing:-0.7px">100%</div><svg class="a" style="left:1245px;top:135px;" width="8" height="5" viewBox="0 0 8 5"><path d="M0.5 0.5 L4.0 4.5 L7.5 0.5" fill="none" stroke="#b0b0b0" stroke-width="1.2"/></svg><div class="a" style="left:1018px;top:151px;width:260px;height:1px;background:#2b2b2b"></div><div class="t" style="left:1025px;top:160px;color:#8a8a8a;font-size:12px;line-height:13px">锁定:</div><svg class="a" style="left:1062px;top:161px;" width="11" height="11" viewBox="0 0 11 11"><rect x="0.5" y="0.5" width="10" height="10" fill="#3a3a3a" stroke="#9a9a9a" stroke-width="1"/><rect x="1" y="1" width="3" height="3" fill="#9a9a9a"/><rect x="7" y="1" width="3" height="3" fill="#9a9a9a"/><rect x="4" y="4" width="3" height="3" fill="#9a9a9a"/><rect x="1" y="7" width="3" height="3" fill="#9a9a9a"/><rect x="7" y="7" width="3" height="3" fill="#9a9a9a"/></svg><svg class="a" style="left:1082px;top:159px;" width="13" height="14" viewBox="0 0 13 14"><path d="M12 1L6 8" stroke="#8a8a8a" stroke-width="2.4" stroke-linecap="round"/><path d="M0.5 13.5Q0.5 8.5 4.5 8.5Q7 9.5 5.5 12Q3.5 14 0.5 13.5Z" fill="#8a8a8a"/></svg><svg class="a" style="left:1104px;top:159px;" width="14" height="14" viewBox="0 0 14 14"><path d="M7 1V13M1 7H13" stroke="#e0e0e0" stroke-width="1.5"/><path d="M7 0L4.5 3H9.5ZM7 14L4.5 11H9.5ZM0 7L3 4.5V9.5ZM14 7L11 4.5V9.5Z" fill="#e0e0e0"/></svg><svg class="a" style="left:1126px;top:159px;" width="15" height="15" viewBox="0 0 15 15"><path d="M3 1V4M0 3.5H3M3 4V12H12M12 15V12M12 12H15M3.5 3.5H9L12 6.5V12" fill="none" stroke="#dedede" stroke-width="1.2"/><path d="M13 1L11 3" stroke="#dedede" stroke-width="1"/></svg><svg class="a" style="left:1150px;top:159px;" width="12" height="13" viewBox="0 0 12 13"><path d="M3 6V4A3 3 0 0 1 9 4V6" fill="none" stroke="#e0e0e0" stroke-width="1.6"/><rect x="1.5" y="6" width="9" height="7" fill="#e0e0e0"/><circle cx="6" cy="9.5" r="1" fill="#333"/></svg><div class="t" style="left:1170px;top:160px;color:#8a8a8a;font-size:12px;line-height:13px">填充:</div><div class="a" style="left:1202px;top:156px;width:55px;height:20px;background:#262626;border:1px solid #3b3b3b;border-radius:3px"></div><div class="a" style="left:1241px;top:157px;width:1px;height:18px;background:#3b3b3b"></div><div class="t" style="left:1207px;top:161px;color:#6e6e6e;font-size:12px;letter-spacing:-0.7px">100%</div><svg class="a" style="left:1245px;top:164px;" width="8" height="5" viewBox="0 0 8 5"><path d="M0.5 0.5 L4.0 4.5 L7.5 0.5" fill="none" stroke="#b0b0b0" stroke-width="1.2"/></svg><div class="a" style="left:1018px;top:181px;width:260px;height:2px;background:#2b2b2b"></div><div class="a" style="left:1018px;top:183px;width:260px;height:177px;background:#333333"></div><div class="a" style="left:1018px;top:183px;width:30px;height:177px;background:#303030"></div><div class="a" style="left:1263px;top:183px;width:15px;height:177px;background:#2e2e2e"></div><div class="a" style="left:1048px;top:183px;width:215px;height:88px;background:#4b4b4b"></div><div class="a" style="left:1018px;top:271px;width:245px;height:1px;background:#3c3c3c"></div><svg class="a" style="left:1027px;top:224px;" width="14" height="9" viewBox="0 0 14 9"><path d="M0.5 4.5Q7 -2.5 13.5 4.5Q7 11.5 0.5 4.5Z" fill="#d8d8d8"/><circle cx="7" cy="4.5" r="2.3" fill="#333"/><circle cx="7" cy="4.5" r="1" fill="#d8d8d8"/></svg><svg class="a" style="left:1027px;top:313px;" width="14" height="9" viewBox="0 0 14 9"><path d="M0.5 4.5Q7 -2.5 13.5 4.5Q7 11.5 0.5 4.5Z" fill="#d8d8d8"/><circle cx="7" cy="4.5" r="2.3" fill="#333"/><circle cx="7" cy="4.5" r="1" fill="#d8d8d8"/></svg><svg class="a" style="left:1049px;top:184px;" width="86" height="86" viewBox="0 0 86 86"><path d="M1.5 30V1.5H29M56 1.5H84.5V30M84.5 58V84.5H56M29 84.5H1.5V58" fill="none" stroke="#f2f2f2" stroke-width="1.1"/></svg><svg class="a" style="left:1085px;top:221px;" width="14" height="14" viewBox="0 0 14 14"><path d="M0.5 0.5H13.5V4H12.3V2.2H8.3V12H10.3V13.5H3.7V12H5.7V2.2H1.7V4H0.5Z" fill="#d8d8d8"/></svg><div class="t" style="left:1142px;top:222px;color:#e8e8e8;font-size:11px;line-height:12px">12:00</div><div class="a" style="left:1052px;top:276px;width:81px;height:81px;background:#000;border:1px solid #5a5a5a"></div><div class="t" style="left:1142px;top:310px;color:#e8e8e8;font-size:12px;line-height:13px">图层</div><div class="t" style="left:1171px;top:311px;color:#e8e8e8;font-size:11px;line-height:12px">1</div><div class="a" style="left:1018px;top:360px;width:260px;height:295px;background:#2b2b2b"></div><div class="a" style="left:1018px;top:655px;width:260px;height:24px;background:#333333"></div><svg class="a" style="left:1075px;top:661px;" width="17" height="10" viewBox="0 0 17 10"><rect x="1" y="1.5" width="7" height="7" rx="3.5" fill="none" stroke="#8c8c8c" stroke-width="1.4"/><rect x="9" y="1.5" width="7" height="7" rx="3.5" fill="none" stroke="#8c8c8c" stroke-width="1.4"/><path d="M5 5H12" stroke="#8c8c8c" stroke-width="1.6"/></svg><div class="t" style="left:1104px;top:660px;color:#8c8c8c;font-size:14px;line-height:13px"><i>fx</i></div><svg class="a" style="left:1131px;top:660px;" width="14" height="11" viewBox="0 0 14 11"><rect x="0" y="0" width="14" height="11" fill="#8c8c8c"/><circle cx="7" cy="5.5" r="3.5" fill="#333"/></svg><svg class="a" style="left:1158px;top:660px;" width="13" height="13" viewBox="0 0 13 13"><circle cx="6" cy="6" r="5" fill="none" stroke="#8c8c8c" stroke-width="1.3"/><path d="M9.5 2.5A5 5 0 0 1 2.5 9.5Z" fill="#8c8c8c"/></svg><svg class="a" style="left:1186px;top:660px;" width="13" height="11" viewBox="0 0 13 11"><path d="M0 1H5L6 2.5H13V11H0Z" fill="#8c8c8c"/></svg><svg class="a" style="left:1213px;top:660px;" width="12" height="12" viewBox="0 0 12 12"><rect x="0.6" y="0.6" width="10.8" height="10.8" fill="none" stroke="#8c8c8c" stroke-width="1.2"/><path d="M6 3V9M3 6H9" stroke="#8c8c8c" stroke-width="1.2"/></svg><svg class="a" style="left:1240px;top:659px;" width="12" height="14" viewBox="0 0 12 14"><path d="M0 2.5H12M4 2.5V0.8H8V2.5" fill="none" stroke="#8c8c8c" stroke-width="1.2"/><path d="M1.5 4H10.5V13.5H1.5Z" fill="none" stroke="#8c8c8c" stroke-width="1.2"/><path d="M4.3 5.5V12M7.7 5.5V12" stroke="#8c8c8c" stroke-width="1"/></svg><svg class="a" style="left:1116px;top:673px;" width="5" height="3" viewBox="0 0 5 3"><path d="M0 0H5L2.5 3Z" fill="#8c8c8c"/></svg><svg class="a" style="left:1170px;top:673px;" width="5" height="3" viewBox="0 0 5 3"><path d="M0 0H5L2.5 3Z" fill="#8c8c8c"/></svg><div class="a" style="left:1278px;top:60px;width:2px;height:620px;background:#1f1f1f"></div><div class="a" style="left:1167px;top:584px;width:109px;height:30px;background:#fff;border:1px solid #c8c8c8"></div><div class="t" style="left:1177px;top:592px;color:#222;font-size:12px;line-height:13px">开启搜狗智写</div><svg class="a" style="left:1259px;top:594px;" width="8" height="8" viewBox="0 0 8 8"><path d="M0.5 0.5L7.5 7.5M7.5 0.5L0.5 7.5" stroke="#222" stroke-width="1.1"/></svg><div class="a" style="left:1100px;top:613px;width:180px;height:26px;background:#fff;border:1px solid #c9d3e3;border-right:none;border-radius:3px 0 0 3px"></div><svg class="a" style="left:1076px;top:607px;" width="34" height="34" viewBox="0 0 34 34"><g transform="rotate(-15 17.0 17.0)"><rect x="4.08" y="4.08" width="25.84" height="25.84" rx="4.08" fill="#f15a24"/></g><path d="M24.48 11.22Q17.0 7.48 10.2 12.24Q7.48 17.0 17.0 17.68Q24.48 18.700000000000003 21.08 22.44Q15.3 25.84 8.84 22.44" fill="none" stroke="#fff" stroke-width="4.42" stroke-linecap="round"/></svg><div class="t" style="left:1116px;top:619px;color:#1a6fdf;font-size:14px;line-height:15px;font-weight:bold">英</div><div class="a" style="left:1142px;top:622px;width:3px;height:3px;background:#1a6fdf;border-radius:50%"></div><div class="t" style="left:1148px;top:617px;color:#1a6fdf;font-size:16px;line-height:17px;font-weight:bold">,</div><svg class="a" style="left:1164px;top:618px;" width="14" height="16" viewBox="0 0 14 16"><rect x="4" y="0" width="6" height="10" rx="3" fill="#1a6fdf"/><path d="M1.5 7A5.5 5.5 0 0 0 12.5 7M7 12.5V15.5" fill="none" stroke="#1a6fdf" stroke-width="1.6"/></svg><svg class="a" style="left:1188px;top:620px;" width="16" height="12" viewBox="0 0 16 12"><rect x="0.8" y="0.8" width="14.4" height="10.4" rx="1.5" fill="none" stroke="#1a6fdf" stroke-width="1.6"/><rect x="3.0" y="3" width="1.5" height="1.5" fill="#1a6fdf"/><rect x="3.0" y="5.5" width="1.5" height="1.5" fill="#1a6fdf"/><rect x="5.6" y="3" width="1.5" height="1.5" fill="#1a6fdf"/><rect x="5.6" y="5.5" width="1.5" height="1.5" fill="#1a6fdf"/><rect x="8.2" y="3" width="1.5" height="1.5" fill="#1a6fdf"/><rect x="8.2" y="5.5" width="1.5" height="1.5" fill="#1a6fdf"/><rect x="10.8" y="3" width="1.5" height="1.5" fill="#1a6fdf"/><rect x="10.8" y="5.5" width="1.5" height="1.5" fill="#1a6fdf"/><rect x="4" y="8" width="8" height="1.4" fill="#1a6fdf"/></svg><svg class="a" style="left:1212px;top:619px;" width="16" height="14" viewBox="0 0 16 14"><path d="M5 0.5L0.5 3L2 6.5L4 6V13.5H12V6L14 6.5L15.5 3L11 0.5Q8 3 5 0.5Z" fill="#1a6fdf"/></svg><svg class="a" style="left:1237px;top:620px;" width="13" height="13" viewBox="0 0 13 13"><rect x="0" y="0" width="5.5" height="5.5" rx="1.5" fill="#1a6fdf"/><rect x="7.5" y="0" width="5.5" height="5.5" rx="1.5" fill="none" stroke="#1a6fdf" stroke-width="1.5"/><rect x="0" y="7.5" width="5.5" height="5.5" rx="1.5" fill="#1a6fdf"/><rect x="7.5" y="7.5" width="5.5" height="5.5" rx="1.5" fill="#1a6fdf"/></svg><div class="a" style="left:1255px;top:613px;width:24px;height:26px;background:#eef0fb"></div><svg class="a" style="left:1259px;top:618px;" width="15" height="15" viewBox="0 0 15 15"><path d="M7.5 0.5L10 4.5H14.5L12 8.5L14.5 12.5H10L7.5 14.5L5 12.5H0.5L3 8.5L0.5 4.5H5Z" fill="#9a7cf0"/><circle cx="7.5" cy="7.5" r="2" fill="#fff"/><path d="M7.5 9V14" stroke="#fff" stroke-width="1"/></svg><svg class="a" style="left:1260px;top:612px;" width="14" height="9" viewBox="0 0 14 9"><path d="M0 1L7 8L14 1" fill="none" stroke="#bfc3cc" stroke-width="1"/></svg><div class="a" style="left:0px;top:680px;width:1280px;height:40px;background:linear-gradient(90deg,#03171f 0%,#021822 35%,#020f20 70%,#020b22 100%)"></div><svg class="a" style="left:16px;top:692px;" width="17" height="17" viewBox="0 0 17 17"><path d="M0 2.3L7 1.3V8H0ZM8 1.1L16 0V8H8ZM0 9H7V15.7L0 14.7ZM8 9H16V17L8 15.9Z" fill="#fff" shape-rendering="crispEdges"/></svg><svg class="a" style="left:63px;top:692px;" width="18" height="16" viewBox="0 0 18 16"><path d="M0.5 1H11M0.5 15H11" stroke="#fff" stroke-width="1.2"/><rect x="1.5" y="4" width="9" height="8" fill="none" stroke="#fff" stroke-width="1.3"/><path d="M15.5 1V3M15.5 5V15" stroke="#fff" stroke-width="1.4"/></svg><svg class="a" style="left:111px;top:689px;" width="25" height="24" viewBox="0 0 25 24"><rect x="4" y="1" width="20" height="15" fill="#4cc2ff"/><rect x="4" y="1" width="20" height="15" fill="url(#g1)"/><circle cx="6" cy="14" r="4.5" fill="#9cd3f0" stroke="#8aa" stroke-width="1.3"/><path d="M9 17L14 22" stroke="#aaa" stroke-width="2"/><defs><linearGradient id="g1" x1="0" y1="0" x2="1" y2="1"><stop offset="0" stop-color="#7fd8ff"/><stop offset="1" stop-color="#1e90e0"/></linearGradient></defs></svg><svg class="a" style="left:159px;top:688px;" width="25" height="25" viewBox="0 0 25 25"><rect x="3" y="1" width="20" height="15" fill="#eaeaea"/><rect x="5" y="3" width="16" height="11" fill="#1b3fb5"/><rect x="1" y="6" width="17" height="6" fill="#d8ecff" stroke="#5a8fd0" stroke-width="0.8"/><path d="M3 8H16M3 10H16" stroke="#3a6fc8" stroke-width="0.8" stroke-dasharray="1 1"/><ellipse cx="13" cy="21" rx="6" ry="2.5" fill="#c8c8c8"/><rect x="12" y="16" width="2" height="4" fill="#bbb"/></svg><svg class="a" style="left:210px;top:691px;" width="23" height="19" viewBox="0 0 23 19"><path d="M0 1H8L10 3H23V19H0Z" fill="#f0c040"/><path d="M0 5H23V19H0Z" fill="#ffd65c"/><rect x="5.5" y="11" width="12" height="8" fill="#3a8ee6"/><rect x="8.5" y="14" width="6" height="5" fill="#ffd65c"/></svg><div class="a" style="left:246px;top:680px;width:48px;height:40px;background:#2a3a48"></div><div class="a" style="left:259px;top:688px;width:22px;height:22px;background:#001e36;border-radius:4px"></div><div class="t" style="left:261px;top:693px;color:#31a8ff;font-size:13px;font-weight:bold;line-height:13px">Ps</div><svg class="a" style="left:307px;top:688px;" width="24" height="24" viewBox="0 0 24 24"><circle cx="12" cy="12" r="11.5" fill="#1e7be0"/><path d="M14 4L7 13H11L9.5 20L17 10.5H12.5Z" fill="#fff"/></svg><div class="a" style="left:201px;top:718px;width:40px;height:2px;background:#76b9ed"></div><div class="a" style="left:246px;top:718px;width:48px;height:2px;background:#76b9ed"></div><div class="a" style="left:299px;top:718px;width:40px;height:2px;background:#76b9ed"></div><svg class="a" style="left:1022px;top:695px;" width="13" height="8" viewBox="0 0 13 8"><path d="M0.5 7.5L6.5 1.5L12.5 7.5" fill="none" stroke="#f0f0f0" stroke-width="1.1"/></svg><svg class="a" style="left:1043px;top:693px;" width="18" height="14" viewBox="0 0 18 14"><path d="M1 5H4L8 1V13L4 9H1Z" fill="none" stroke="#f0f0f0" stroke-width="1"/><path d="M10.5 4.5Q12 7 10.5 9.5M13 3Q15 7 13 11M15.5 1.5Q18 7 15.5 12.5" fill="none" stroke="#f0f0f0" stroke-width="1"/></svg><svg class="a" style="left:1068px;top:693px;" width="24" height="14" viewBox="0 0 24 14"><rect x="0.7" y="0.7" width="22.6" height="12.6" fill="none" stroke="#f0f0f0" stroke-width="1.2"/><rect x="3.0" y="3.5" width="1.2" height="1.2" fill="#f0f0f0"/><rect x="3.0" y="6.5" width="1.2" height="1.2" fill="#f0f0f0"/><rect x="5.5" y="3.5" width="1.2" height="1.2" fill="#f0f0f0"/><rect x="5.5" y="6.5" width="1.2" height="1.2" fill="#f0f0f0"/><rect x="8.0" y="3.5" width="1.2" height="1.2" fill="#f0f0f0"/><rect x="8.0" y="6.5" width="1.2" height="1.2" fill="#f0f0f0"/><rect x="10.5" y="3.5" width="1.2" height="1.2" fill="#f0f0f0"/><rect x="10.5" y="6.5" width="1.2" height="1.2" fill="#f0f0f0"/><rect x="13.0" y="3.5" width="1.2" height="1.2" fill="#f0f0f0"/><rect x="13.0" y="6.5" width="1.2" height="1.2" fill="#f0f0f0"/><rect x="15.5" y="3.5" width="1.2" height="1.2" fill="#f0f0f0"/><rect x="15.5" y="6.5" width="1.2" height="1.2" fill="#f0f0f0"/><rect x="18.0" y="3.5" width="1.2" height="1.2" fill="#f0f0f0"/><rect x="18.0" y="6.5" width="1.2" height="1.2" fill="#f0f0f0"/><rect x="4" y="9.5" width="16" height="1.2" fill="#f0f0f0"/></svg><div class="t" style="left:1100px;top:692px;color:#f0f0f0;font-size:14px;line-height:15px">英</div><svg class="a" style="left:1126px;top:690px;" width="20" height="20" viewBox="0 0 20 20"><g transform="rotate(-15 10.0 10.0)"><rect x="2.4" y="2.4" width="15.2" height="15.2" rx="2.4" fill="#f15a24"/></g><path d="M14.399999999999999 6.6000000000000005Q10.0 4.4 6.0 7.199999999999999Q4.4 10.0 10.0 10.4Q14.399999999999999 11.0 12.4 13.200000000000001Q9.0 15.2 5.2 13.200000000000001" fill="none" stroke="#fff" stroke-width="2.6" stroke-linecap="round"/></svg><div class="t" style="left:1175px;top:683px;color:#f4f4f4;font-size:14px;line-height:14px;letter-spacing:-0.6px">14:20</div><div class="t" style="left:1160px;top:703px;color:#f4f4f4;font-size:14px;line-height:14px;letter-spacing:-0.15px">2023/9/30</div><svg class="a" style="left:1238px;top:691px;" width="28" height="28" viewBox="0 0 28 28"><path d="M1 1H17V14H8.5L6 16.5V14H1Z" fill="#f4f4f4"/><path d="M4 4.5H14M4 7.5H14M4 10.5H10" stroke="#050d1c" stroke-width="1.3"/><circle cx="16.8" cy="16.3" r="8" fill="#2b2b2b" stroke="#777" stroke-width="0.9"/></svg><div class="t" style="left:1251px;top:703px;color:#f8f8f8;font-size:11px;line-height:12px;font-weight:bold">3</div><div class="a" style="left:1275px;top:680px;width:1px;height:40px;background:#3c4650"></div></div></body></html>
